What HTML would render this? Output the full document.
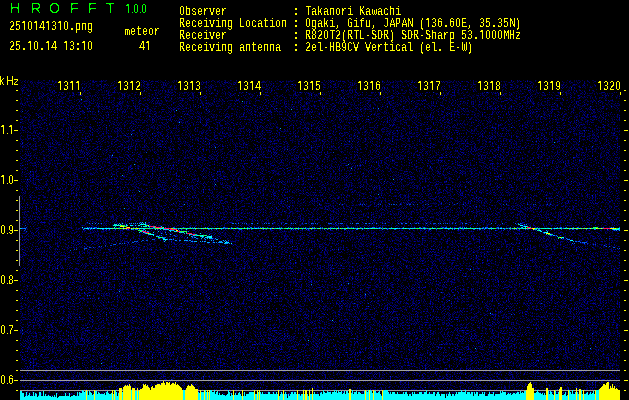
<!DOCTYPE html>
<html><head><meta charset="utf-8"><style>
html,body{margin:0;padding:0;background:#000;width:629px;height:400px;overflow:hidden;position:relative}
.t{position:absolute;white-space:pre;font-family:"Liberation Mono",monospace;font-size:13px;line-height:13px;color:#ff0;transform-origin:0 0;transform:scaleX(0.7692);filter:url(#cr)}
.t i{font-style:normal;font-family:"Liberation Sans",sans-serif;display:inline-block;width:7.8px;height:13px;text-align:center;line-height:13px;vertical-align:top;position:relative;top:-1px}
.t i.c{transform:scaleY(1.14);transform-origin:0 1px;clip-path:inset(-5px -5px 3.5px -5px)}
.t b{font-weight:normal;color:transparent}
.s{position:absolute;white-space:pre;font-family:"Liberation Sans",sans-serif;font-size:13px;line-height:13px;color:#ff0;transform-origin:0 0;filter:url(#cr)}
.g{position:absolute;white-space:pre;font-family:"Liberation Sans",sans-serif;font-size:14px;line-height:14px;color:#0f0;filter:url(#cr)}
svg{position:absolute;left:0;top:0}
</style></head><body>

<svg width="629" height="400" viewBox="0 0 629 400" shape-rendering="crispEdges">
<defs><filter id="nz" x="20" y="80" width="600" height="320" filterUnits="userSpaceOnUse" color-interpolation-filters="sRGB">
<feTurbulence type="fractalNoise" baseFrequency="1.37" numOctaves="1" seed="3"/>
<feColorMatrix type="matrix" values="0 0 0 0 0  0 0 1 0 0  0 0 1 0 0  0 0 0 0 1"/>
<feComponentTransfer><feFuncR type="linear" slope="0" intercept="0"/><feFuncG type="table" tableValues="0 0.0 0.0 0.0 0.0 0.0 0.0 0.0 0.0 0.0 0.0 0.0 0.0 0.0 0.0 0.0 0.0 0.0 0.0 0.0 0.0 0.0 0.0 0.0 0.0 0.0 0.0 0.0 0.0 0.0 0.0 0.0 0.0 0.0 0.0 0.0 0.0 0.0 0.063 0.125 0.188 0.25 0.272 0.294 0.317 0.339 0.361 0.383 0.406 0.428 0.45"/><feFuncB type="table" tableValues="0 0.0 0.0 0.0 0.0 0.0 0.0 0.0 0.0 0.0 0.0 0.0 0.0 0.0 0.0 0.0 0.0 0.0 0.0 0.0 0.0 0.0 0.0 0.0 0.0 0.0 0.0 0.0 0.256 0.319 0.376 0.429 0.482 0.538 0.594 0.65 0.7 0.75 0.8 0.85 0.864 0.877 0.891 0.905 0.918 0.932 0.945 0.959 0.973 0.986 1"/><feFuncA type="linear" slope="0" intercept="1"/></feComponentTransfer>
</filter><filter id="cr" color-interpolation-filters="sRGB"><feComponentTransfer><feFuncA type="discrete" tableValues="0 1"/></feComponentTransfer></filter></defs>
<rect x="20" y="80" width="600" height="320" fill="#000" filter="url(#nz)"/>
<linearGradient id="dk" x1="0" y1="0" x2="0" y2="1"><stop offset="0" stop-color="#000" stop-opacity="0.1"/><stop offset="0.7" stop-color="#000" stop-opacity="0"/></linearGradient>
<rect x="20" y="80" width="600" height="320" fill="url(#dk)"/>
<rect x="87" y="227" width="1" height="1" fill="#0060ff"/>
<rect x="88" y="229" width="1" height="1" fill="#0050ff"/>
<rect x="89" y="227" width="1" height="1" fill="#0060ff"/>
<rect x="90" y="229" width="1" height="1" fill="#0050ff"/>
<rect x="91" y="227" width="1" height="1" fill="#0050ff"/>
<rect x="94" y="227" width="1" height="1" fill="#0040e0"/>
<rect x="95" y="227" width="1" height="1" fill="#0050ff"/>
<rect x="96" y="227" width="1" height="1" fill="#0050ff"/>
<rect x="102" y="229" width="1" height="1" fill="#0060ff"/>
<rect x="103" y="229" width="1" height="1" fill="#0050ff"/>
<rect x="106" y="229" width="1" height="1" fill="#0060ff"/>
<rect x="109" y="229" width="1" height="1" fill="#0050ff"/>
<rect x="115" y="229" width="1" height="1" fill="#0050ff"/>
<rect x="119" y="227" width="1" height="1" fill="#0040e0"/>
<rect x="123" y="229" width="1" height="1" fill="#0060ff"/>
<rect x="126" y="229" width="1" height="1" fill="#0050ff"/>
<rect x="129" y="227" width="1" height="1" fill="#0040e0"/>
<rect x="133" y="227" width="1" height="1" fill="#0040e0"/>
<rect x="133" y="229" width="1" height="1" fill="#0060ff"/>
<rect x="136" y="227" width="1" height="1" fill="#0060ff"/>
<rect x="136" y="229" width="1" height="1" fill="#0060ff"/>
<rect x="137" y="229" width="1" height="1" fill="#0060ff"/>
<rect x="143" y="229" width="1" height="1" fill="#0060ff"/>
<rect x="149" y="227" width="1" height="1" fill="#0060ff"/>
<rect x="156" y="227" width="1" height="1" fill="#0040e0"/>
<rect x="165" y="227" width="1" height="1" fill="#0050ff"/>
<rect x="167" y="229" width="1" height="1" fill="#0040e0"/>
<rect x="173" y="227" width="1" height="1" fill="#0050ff"/>
<rect x="178" y="229" width="1" height="1" fill="#0050ff"/>
<rect x="181" y="229" width="1" height="1" fill="#0050ff"/>
<rect x="183" y="227" width="1" height="1" fill="#0060ff"/>
<rect x="190" y="227" width="1" height="1" fill="#0060ff"/>
<rect x="192" y="227" width="1" height="1" fill="#0040e0"/>
<rect x="194" y="227" width="1" height="1" fill="#0050ff"/>
<rect x="195" y="229" width="1" height="1" fill="#0050ff"/>
<rect x="205" y="227" width="1" height="1" fill="#0060ff"/>
<rect x="207" y="227" width="1" height="1" fill="#0040e0"/>
<rect x="208" y="229" width="1" height="1" fill="#0050ff"/>
<rect x="209" y="229" width="1" height="1" fill="#0040e0"/>
<rect x="211" y="229" width="1" height="1" fill="#0060ff"/>
<rect x="216" y="229" width="1" height="1" fill="#0050ff"/>
<rect x="221" y="229" width="1" height="1" fill="#0060ff"/>
<rect x="223" y="227" width="1" height="1" fill="#0040e0"/>
<rect x="224" y="227" width="1" height="1" fill="#0060ff"/>
<rect x="231" y="227" width="1" height="1" fill="#0060ff"/>
<rect x="237" y="227" width="1" height="1" fill="#0040e0"/>
<rect x="239" y="229" width="1" height="1" fill="#0040e0"/>
<rect x="240" y="229" width="1" height="1" fill="#0060ff"/>
<rect x="241" y="229" width="1" height="1" fill="#0050ff"/>
<rect x="244" y="227" width="1" height="1" fill="#0060ff"/>
<rect x="247" y="227" width="1" height="1" fill="#0050ff"/>
<rect x="247" y="229" width="1" height="1" fill="#0050ff"/>
<rect x="250" y="227" width="1" height="1" fill="#0060ff"/>
<rect x="251" y="227" width="1" height="1" fill="#0060ff"/>
<rect x="251" y="229" width="1" height="1" fill="#0040e0"/>
<rect x="254" y="227" width="1" height="1" fill="#0040e0"/>
<rect x="258" y="227" width="1" height="1" fill="#0050ff"/>
<rect x="260" y="227" width="1" height="1" fill="#0050ff"/>
<rect x="262" y="227" width="1" height="1" fill="#0050ff"/>
<rect x="263" y="227" width="1" height="1" fill="#0040e0"/>
<rect x="263" y="229" width="1" height="1" fill="#0050ff"/>
<rect x="266" y="229" width="1" height="1" fill="#0040e0"/>
<rect x="267" y="227" width="1" height="1" fill="#0040e0"/>
<rect x="270" y="229" width="1" height="1" fill="#0040e0"/>
<rect x="279" y="227" width="1" height="1" fill="#0040e0"/>
<rect x="280" y="229" width="1" height="1" fill="#0050ff"/>
<rect x="281" y="227" width="1" height="1" fill="#0050ff"/>
<rect x="288" y="227" width="1" height="1" fill="#0060ff"/>
<rect x="290" y="227" width="1" height="1" fill="#0050ff"/>
<rect x="291" y="229" width="1" height="1" fill="#0050ff"/>
<rect x="293" y="229" width="1" height="1" fill="#0050ff"/>
<rect x="295" y="229" width="1" height="1" fill="#0040e0"/>
<rect x="298" y="227" width="1" height="1" fill="#0040e0"/>
<rect x="298" y="229" width="1" height="1" fill="#0050ff"/>
<rect x="302" y="229" width="1" height="1" fill="#0040e0"/>
<rect x="305" y="227" width="1" height="1" fill="#0040e0"/>
<rect x="306" y="229" width="1" height="1" fill="#0050ff"/>
<rect x="308" y="229" width="1" height="1" fill="#0040e0"/>
<rect x="311" y="229" width="1" height="1" fill="#0060ff"/>
<rect x="312" y="227" width="1" height="1" fill="#0050ff"/>
<rect x="314" y="227" width="1" height="1" fill="#0060ff"/>
<rect x="320" y="227" width="1" height="1" fill="#0050ff"/>
<rect x="322" y="227" width="1" height="1" fill="#0040e0"/>
<rect x="324" y="229" width="1" height="1" fill="#0050ff"/>
<rect x="327" y="229" width="1" height="1" fill="#0060ff"/>
<rect x="330" y="227" width="1" height="1" fill="#0040e0"/>
<rect x="330" y="229" width="1" height="1" fill="#0050ff"/>
<rect x="336" y="229" width="1" height="1" fill="#0060ff"/>
<rect x="338" y="227" width="1" height="1" fill="#0060ff"/>
<rect x="344" y="229" width="1" height="1" fill="#0050ff"/>
<rect x="345" y="229" width="1" height="1" fill="#0060ff"/>
<rect x="347" y="227" width="1" height="1" fill="#0040e0"/>
<rect x="348" y="227" width="1" height="1" fill="#0050ff"/>
<rect x="351" y="227" width="1" height="1" fill="#0040e0"/>
<rect x="353" y="227" width="1" height="1" fill="#0040e0"/>
<rect x="356" y="229" width="1" height="1" fill="#0060ff"/>
<rect x="357" y="229" width="1" height="1" fill="#0060ff"/>
<rect x="360" y="227" width="1" height="1" fill="#0040e0"/>
<rect x="362" y="229" width="1" height="1" fill="#0060ff"/>
<rect x="364" y="227" width="1" height="1" fill="#0040e0"/>
<rect x="372" y="227" width="1" height="1" fill="#0060ff"/>
<rect x="373" y="227" width="1" height="1" fill="#0050ff"/>
<rect x="374" y="227" width="1" height="1" fill="#0050ff"/>
<rect x="379" y="227" width="1" height="1" fill="#0050ff"/>
<rect x="380" y="227" width="1" height="1" fill="#0040e0"/>
<rect x="382" y="227" width="1" height="1" fill="#0040e0"/>
<rect x="382" y="229" width="1" height="1" fill="#0060ff"/>
<rect x="387" y="229" width="1" height="1" fill="#0050ff"/>
<rect x="391" y="227" width="1" height="1" fill="#0050ff"/>
<rect x="394" y="229" width="1" height="1" fill="#0040e0"/>
<rect x="395" y="229" width="1" height="1" fill="#0050ff"/>
<rect x="403" y="227" width="1" height="1" fill="#0060ff"/>
<rect x="409" y="229" width="1" height="1" fill="#0060ff"/>
<rect x="414" y="227" width="1" height="1" fill="#0040e0"/>
<rect x="419" y="227" width="1" height="1" fill="#0060ff"/>
<rect x="420" y="227" width="1" height="1" fill="#0050ff"/>
<rect x="423" y="227" width="1" height="1" fill="#0040e0"/>
<rect x="424" y="227" width="1" height="1" fill="#0060ff"/>
<rect x="424" y="229" width="1" height="1" fill="#0040e0"/>
<rect x="429" y="229" width="1" height="1" fill="#0050ff"/>
<rect x="430" y="229" width="1" height="1" fill="#0060ff"/>
<rect x="432" y="227" width="1" height="1" fill="#0060ff"/>
<rect x="436" y="229" width="1" height="1" fill="#0050ff"/>
<rect x="442" y="227" width="1" height="1" fill="#0040e0"/>
<rect x="443" y="227" width="1" height="1" fill="#0050ff"/>
<rect x="445" y="227" width="1" height="1" fill="#0040e0"/>
<rect x="446" y="227" width="1" height="1" fill="#0060ff"/>
<rect x="448" y="229" width="1" height="1" fill="#0060ff"/>
<rect x="450" y="227" width="1" height="1" fill="#0050ff"/>
<rect x="452" y="229" width="1" height="1" fill="#0060ff"/>
<rect x="454" y="229" width="1" height="1" fill="#0050ff"/>
<rect x="458" y="229" width="1" height="1" fill="#0050ff"/>
<rect x="459" y="227" width="1" height="1" fill="#0050ff"/>
<rect x="460" y="227" width="1" height="1" fill="#0060ff"/>
<rect x="462" y="227" width="1" height="1" fill="#0050ff"/>
<rect x="463" y="229" width="1" height="1" fill="#0040e0"/>
<rect x="464" y="227" width="1" height="1" fill="#0060ff"/>
<rect x="466" y="227" width="1" height="1" fill="#0050ff"/>
<rect x="470" y="227" width="1" height="1" fill="#0050ff"/>
<rect x="473" y="229" width="1" height="1" fill="#0050ff"/>
<rect x="474" y="229" width="1" height="1" fill="#0050ff"/>
<rect x="479" y="229" width="1" height="1" fill="#0050ff"/>
<rect x="480" y="229" width="1" height="1" fill="#0040e0"/>
<rect x="483" y="227" width="1" height="1" fill="#0060ff"/>
<rect x="484" y="229" width="1" height="1" fill="#0050ff"/>
<rect x="485" y="227" width="1" height="1" fill="#0060ff"/>
<rect x="486" y="227" width="1" height="1" fill="#0050ff"/>
<rect x="487" y="227" width="1" height="1" fill="#0050ff"/>
<rect x="491" y="227" width="1" height="1" fill="#0050ff"/>
<rect x="491" y="229" width="1" height="1" fill="#0060ff"/>
<rect x="497" y="227" width="1" height="1" fill="#0060ff"/>
<rect x="498" y="227" width="1" height="1" fill="#0050ff"/>
<rect x="501" y="227" width="1" height="1" fill="#0040e0"/>
<rect x="504" y="229" width="1" height="1" fill="#0050ff"/>
<rect x="510" y="227" width="1" height="1" fill="#0060ff"/>
<rect x="510" y="229" width="1" height="1" fill="#0050ff"/>
<rect x="514" y="227" width="1" height="1" fill="#0060ff"/>
<rect x="514" y="229" width="1" height="1" fill="#0050ff"/>
<rect x="516" y="229" width="1" height="1" fill="#0050ff"/>
<rect x="517" y="227" width="1" height="1" fill="#0050ff"/>
<rect x="519" y="229" width="1" height="1" fill="#0050ff"/>
<rect x="525" y="229" width="1" height="1" fill="#0050ff"/>
<rect x="527" y="227" width="1" height="1" fill="#0060ff"/>
<rect x="527" y="229" width="1" height="1" fill="#0040e0"/>
<rect x="529" y="227" width="1" height="1" fill="#0040e0"/>
<rect x="534" y="229" width="1" height="1" fill="#0040e0"/>
<rect x="537" y="227" width="1" height="1" fill="#0040e0"/>
<rect x="551" y="229" width="1" height="1" fill="#0060ff"/>
<rect x="557" y="227" width="1" height="1" fill="#0060ff"/>
<rect x="560" y="227" width="1" height="1" fill="#0050ff"/>
<rect x="561" y="227" width="1" height="1" fill="#0050ff"/>
<rect x="561" y="229" width="1" height="1" fill="#0040e0"/>
<rect x="566" y="227" width="1" height="1" fill="#0060ff"/>
<rect x="569" y="229" width="1" height="1" fill="#0050ff"/>
<rect x="572" y="229" width="1" height="1" fill="#0060ff"/>
<rect x="573" y="227" width="1" height="1" fill="#0060ff"/>
<rect x="573" y="229" width="1" height="1" fill="#0040e0"/>
<rect x="576" y="229" width="1" height="1" fill="#0060ff"/>
<rect x="577" y="227" width="1" height="1" fill="#0050ff"/>
<rect x="577" y="229" width="1" height="1" fill="#0040e0"/>
<rect x="578" y="227" width="1" height="1" fill="#0040e0"/>
<rect x="586" y="229" width="1" height="1" fill="#0050ff"/>
<rect x="593" y="227" width="1" height="1" fill="#0040e0"/>
<rect x="595" y="227" width="1" height="1" fill="#0050ff"/>
<rect x="595" y="229" width="1" height="1" fill="#0050ff"/>
<rect x="603" y="227" width="1" height="1" fill="#0040e0"/>
<rect x="607" y="229" width="1" height="1" fill="#0060ff"/>
<rect x="611" y="227" width="1" height="1" fill="#0060ff"/>
<rect x="619" y="227" width="1" height="1" fill="#0060ff"/>
<rect x="594" y="229" width="1" height="1" fill="#0090ff"/>
<rect x="596" y="228" width="1" height="1" fill="#00c0ff"/>
<rect x="613" y="227" width="1" height="1" fill="#0090ff"/>
<rect x="614" y="230" width="1" height="1" fill="#0050ff"/>
<rect x="616" y="230" width="1" height="1" fill="#0090ff"/>
<rect x="619" y="230" width="1" height="1" fill="#00c0ff"/>
<rect x="114" y="227" width="1" height="1" fill="#00e0ff"/>
<rect x="119" y="223" width="1" height="1" fill="#0090ff"/>
<rect x="121" y="226" width="1" height="1" fill="#0090ff"/>
<rect x="122" y="223" width="1" height="1" fill="#00e0ff"/>
<rect x="120" y="228" width="1" height="1" fill="#00e0ff"/>
<rect x="126" y="224" width="1" height="1" fill="#00c0ff"/>
<rect x="128" y="229" width="1" height="1" fill="#0050ff"/>
<rect x="140" y="222" width="1" height="1" fill="#0090ff"/>
<rect x="141" y="223" width="1" height="1" fill="#0050ff"/>
<rect x="142" y="222" width="1" height="1" fill="#00e0ff"/>
<rect x="143" y="223" width="1" height="1" fill="#00e0ff"/>
<rect x="145" y="222" width="1" height="1" fill="#00e0ff"/>
<rect x="145" y="224" width="1" height="1" fill="#0050ff"/>
<rect x="155" y="229" width="1" height="1" fill="#00e0ff"/>
<rect x="157" y="229" width="1" height="1" fill="#0050ff"/>
<rect x="160" y="229" width="1" height="1" fill="#00c0ff"/>
<rect x="161" y="226" width="1" height="1" fill="#00e0ff"/>
<rect x="162" y="228" width="1" height="1" fill="#0050ff"/>
<rect x="170" y="231" width="1" height="1" fill="#00c0ff"/>
<rect x="179" y="230" width="1" height="1" fill="#0050ff"/>
<rect x="186" y="229" width="1" height="1" fill="#00e0ff"/>
<rect x="188" y="231" width="1" height="1" fill="#0050ff"/>
<rect x="189" y="235" width="1" height="1" fill="#0090ff"/>
<rect x="192" y="236" width="1" height="1" fill="#0050ff"/>
<rect x="193" y="235" width="1" height="1" fill="#00e0ff"/>
<rect x="194" y="235" width="1" height="1" fill="#0090ff"/>
<rect x="196" y="234" width="1" height="1" fill="#0090ff"/>
<rect x="200" y="233" width="1" height="1" fill="#00e0ff"/>
<rect x="201" y="236" width="1" height="1" fill="#00c0ff"/>
<rect x="202" y="237" width="1" height="1" fill="#00e0ff"/>
<rect x="209" y="234" width="1" height="1" fill="#0050ff"/>
<rect x="210" y="237" width="1" height="1" fill="#0050ff"/>
<rect x="209" y="238" width="1" height="1" fill="#00c0ff"/>
<rect x="210" y="236" width="1" height="1" fill="#00e0ff"/>
<rect x="211" y="235" width="1" height="1" fill="#0050ff"/>
<rect x="225" y="240" width="1" height="1" fill="#0090ff"/>
<rect x="228" y="240" width="1" height="1" fill="#0050ff"/>
<rect x="139" y="232" width="1" height="1" fill="#00e0ff"/>
<rect x="140" y="231" width="1" height="1" fill="#00e0ff"/>
<rect x="142" y="230" width="1" height="1" fill="#00e0ff"/>
<rect x="143" y="230" width="1" height="1" fill="#0050ff"/>
<rect x="145" y="233" width="1" height="1" fill="#0090ff"/>
<rect x="145" y="230" width="1" height="1" fill="#00c0ff"/>
<rect x="147" y="231" width="1" height="1" fill="#0090ff"/>
<rect x="148" y="231" width="1" height="1" fill="#0050ff"/>
<rect x="148" y="234" width="1" height="1" fill="#0090ff"/>
<rect x="149" y="234" width="1" height="1" fill="#00c0ff"/>
<rect x="153" y="232" width="1" height="1" fill="#00e0ff"/>
<rect x="159" y="235" width="1" height="1" fill="#0050ff"/>
<rect x="161" y="235" width="1" height="1" fill="#0050ff"/>
<rect x="162" y="238" width="1" height="1" fill="#0090ff"/>
<rect x="163" y="237" width="1" height="1" fill="#0050ff"/>
<rect x="164" y="241" width="1" height="1" fill="#00e0ff"/>
<rect x="165" y="240" width="1" height="1" fill="#00c0ff"/>
<rect x="520" y="223" width="1" height="1" fill="#0050ff"/>
<rect x="521" y="227" width="1" height="1" fill="#00c0ff"/>
<rect x="522" y="227" width="1" height="1" fill="#00e0ff"/>
<rect x="524" y="224" width="1" height="1" fill="#0090ff"/>
<rect x="525" y="227" width="1" height="1" fill="#00e0ff"/>
<rect x="526" y="224" width="1" height="1" fill="#0090ff"/>
<rect x="528" y="228" width="1" height="1" fill="#0050ff"/>
<rect x="538" y="229" width="1" height="1" fill="#0090ff"/>
<rect x="539" y="229" width="1" height="1" fill="#0050ff"/>
<rect x="544" y="233" width="1" height="1" fill="#0050ff"/>
<rect x="546" y="230" width="1" height="1" fill="#0090ff"/>
<rect x="547" y="231" width="1" height="1" fill="#00c0ff"/>
<rect x="546" y="234" width="1" height="1" fill="#0090ff"/>
<rect x="547" y="232" width="1" height="1" fill="#0090ff"/>
<rect x="550" y="235" width="1" height="1" fill="#0050ff"/>
<rect x="551" y="235" width="1" height="1" fill="#0050ff"/>
<rect x="558" y="238" width="1" height="1" fill="#00c0ff"/>
<rect x="561" y="238" width="1" height="1" fill="#00e0ff"/>
<rect x="150" y="226" width="1" height="1" fill="#00a0ff"/>
<rect x="151" y="226" width="1" height="1" fill="#00c0ff"/>
<rect x="152" y="226" width="1" height="1" fill="#00c0ff"/>
<rect x="153" y="227" width="1" height="1" fill="#00c0ff"/>
<rect x="154" y="227" width="1" height="1" fill="#00c0ff"/>
<rect x="155" y="227" width="1" height="1" fill="#00e0ff"/>
<rect x="156" y="227" width="1" height="1" fill="#00e0ff"/>
<rect x="158" y="228" width="1" height="1" fill="#00c0ff"/>
<rect x="159" y="228" width="1" height="1" fill="#00ffc0"/>
<rect x="160" y="228" width="1" height="1" fill="#00ffc0"/>
<rect x="161" y="228" width="1" height="1" fill="#00e0ff"/>
<rect x="162" y="228" width="1" height="1" fill="#00ffc0"/>
<rect x="163" y="229" width="1" height="1" fill="#00c0ff"/>
<rect x="164" y="229" width="1" height="1" fill="#00e0ff"/>
<rect x="165" y="229" width="1" height="1" fill="#00c0ff"/>
<rect x="166" y="229" width="1" height="1" fill="#00c0ff"/>
<rect x="167" y="229" width="1" height="1" fill="#00e0ff"/>
<rect x="168" y="229" width="1" height="1" fill="#00e0ff"/>
<rect x="169" y="230" width="1" height="1" fill="#00e0ff"/>
<rect x="170" y="230" width="1" height="1" fill="#00e0ff"/>
<rect x="171" y="230" width="1" height="1" fill="#00a0ff"/>
<rect x="172" y="230" width="1" height="1" fill="#00a0ff"/>
<rect x="173" y="230" width="1" height="1" fill="#00ffc0"/>
<rect x="174" y="231" width="1" height="1" fill="#00e0ff"/>
<rect x="175" y="231" width="1" height="1" fill="#00c0ff"/>
<rect x="176" y="231" width="1" height="1" fill="#00ffc0"/>
<rect x="177" y="231" width="1" height="1" fill="#00c0ff"/>
<rect x="178" y="231" width="1" height="1" fill="#00e0ff"/>
<rect x="179" y="232" width="1" height="1" fill="#00ffc0"/>
<rect x="180" y="232" width="1" height="1" fill="#00a0ff"/>
<rect x="181" y="232" width="1" height="1" fill="#00ffc0"/>
<rect x="182" y="232" width="1" height="1" fill="#00a0ff"/>
<rect x="183" y="232" width="1" height="1" fill="#00e0ff"/>
<rect x="184" y="233" width="1" height="1" fill="#00c0ff"/>
<rect x="186" y="233" width="1" height="1" fill="#00c0ff"/>
<rect x="187" y="233" width="1" height="1" fill="#00e0ff"/>
<rect x="188" y="233" width="1" height="1" fill="#00ffc0"/>
<rect x="189" y="234" width="1" height="1" fill="#00ffc0"/>
<rect x="190" y="234" width="1" height="1" fill="#00c0ff"/>
<rect x="191" y="234" width="1" height="1" fill="#00c0ff"/>
<rect x="192" y="234" width="1" height="1" fill="#00ffc0"/>
<rect x="193" y="234" width="1" height="1" fill="#00a0ff"/>
<rect x="194" y="235" width="1" height="1" fill="#00ffc0"/>
<rect x="195" y="235" width="1" height="1" fill="#00a0ff"/>
<rect x="196" y="235" width="1" height="1" fill="#00e0ff"/>
<rect x="197" y="235" width="1" height="1" fill="#00a0ff"/>
<rect x="199" y="235" width="1" height="1" fill="#00a0ff"/>
<rect x="200" y="236" width="1" height="1" fill="#00c0ff"/>
<rect x="201" y="236" width="1" height="1" fill="#00ffc0"/>
<rect x="202" y="236" width="1" height="1" fill="#00e0ff"/>
<rect x="203" y="236" width="1" height="1" fill="#00e0ff"/>
<rect x="205" y="237" width="1" height="1" fill="#00e0ff"/>
<rect x="206" y="237" width="1" height="1" fill="#00c0ff"/>
<rect x="207" y="237" width="1" height="1" fill="#00e0ff"/>
<rect x="208" y="237" width="1" height="1" fill="#00a0ff"/>
<rect x="209" y="237" width="1" height="1" fill="#00e0ff"/>
<rect x="210" y="238" width="1" height="1" fill="#00a0ff"/>
<rect x="211" y="238" width="1" height="1" fill="#00a0ff"/>
<rect x="212" y="238" width="1" height="1" fill="#00e0ff"/>
<rect x="114" y="224" width="1" height="1" fill="#00ffc0"/>
<rect x="115" y="224" width="1" height="1" fill="#00c0ff"/>
<rect x="116" y="224" width="1" height="1" fill="#00e0ff"/>
<rect x="118" y="224" width="1" height="1" fill="#00c0ff"/>
<rect x="120" y="224" width="1" height="1" fill="#00e0ff"/>
<rect x="123" y="225" width="1" height="1" fill="#00c0ff"/>
<rect x="126" y="225" width="1" height="1" fill="#00e0ff"/>
<rect x="127" y="225" width="1" height="1" fill="#00c0ff"/>
<rect x="130" y="225" width="1" height="1" fill="#00e0ff"/>
<rect x="131" y="225" width="1" height="1" fill="#00ffc0"/>
<rect x="132" y="225" width="1" height="1" fill="#00e0ff"/>
<rect x="135" y="225" width="1" height="1" fill="#00e0ff"/>
<rect x="138" y="225" width="1" height="1" fill="#00ffc0"/>
<rect x="139" y="225" width="1" height="1" fill="#00e0ff"/>
<rect x="141" y="226" width="1" height="1" fill="#00ffc0"/>
<rect x="143" y="226" width="1" height="1" fill="#00e0ff"/>
<rect x="144" y="226" width="1" height="1" fill="#00ffc0"/>
<rect x="145" y="226" width="1" height="1" fill="#00ffc0"/>
<rect x="146" y="226" width="1" height="1" fill="#00e0ff"/>
<rect x="148" y="226" width="1" height="1" fill="#00e0ff"/>
<rect x="149" y="226" width="1" height="1" fill="#00c0ff"/>
<rect x="150" y="226" width="1" height="1" fill="#00c0ff"/>
<rect x="138" y="230" width="1" height="1" fill="#00e0ff"/>
<rect x="139" y="230" width="1" height="1" fill="#00ffc0"/>
<rect x="140" y="231" width="1" height="1" fill="#00ffc0"/>
<rect x="141" y="231" width="1" height="1" fill="#00ffc0"/>
<rect x="142" y="231" width="1" height="1" fill="#00a0ff"/>
<rect x="143" y="232" width="1" height="1" fill="#00ffc0"/>
<rect x="144" y="232" width="1" height="1" fill="#00c0ff"/>
<rect x="145" y="232" width="1" height="1" fill="#00ffc0"/>
<rect x="146" y="233" width="1" height="1" fill="#00e0ff"/>
<rect x="147" y="233" width="1" height="1" fill="#00e0ff"/>
<rect x="148" y="233" width="1" height="1" fill="#00a0ff"/>
<rect x="149" y="234" width="1" height="1" fill="#00c0ff"/>
<rect x="150" y="234" width="1" height="1" fill="#00a0ff"/>
<rect x="151" y="234" width="1" height="1" fill="#00c0ff"/>
<rect x="152" y="234" width="1" height="1" fill="#00ffc0"/>
<rect x="153" y="235" width="1" height="1" fill="#00e0ff"/>
<rect x="156" y="236" width="1" height="1" fill="#00ffc0"/>
<rect x="157" y="236" width="1" height="1" fill="#00a0ff"/>
<rect x="158" y="236" width="1" height="1" fill="#00c0ff"/>
<rect x="159" y="237" width="1" height="1" fill="#00ffc0"/>
<rect x="160" y="237" width="1" height="1" fill="#00a0ff"/>
<rect x="161" y="237" width="1" height="1" fill="#00c0ff"/>
<rect x="162" y="238" width="1" height="1" fill="#00a0ff"/>
<rect x="163" y="238" width="1" height="1" fill="#00e0ff"/>
<rect x="164" y="238" width="1" height="1" fill="#00a0ff"/>
<rect x="165" y="239" width="1" height="1" fill="#00a0ff"/>
<rect x="166" y="239" width="1" height="1" fill="#00ffc0"/>
<rect x="166" y="239" width="1" height="1" fill="#0070ff"/>
<rect x="167" y="239" width="1" height="1" fill="#0090ff"/>
<rect x="169" y="239" width="1" height="1" fill="#0070ff"/>
<rect x="170" y="239" width="1" height="1" fill="#0070ff"/>
<rect x="171" y="239" width="1" height="1" fill="#00b0ff"/>
<rect x="173" y="239" width="1" height="1" fill="#0090ff"/>
<rect x="175" y="240" width="1" height="1" fill="#0090ff"/>
<rect x="176" y="240" width="1" height="1" fill="#0070ff"/>
<rect x="179" y="240" width="1" height="1" fill="#0070ff"/>
<rect x="180" y="240" width="1" height="1" fill="#0070ff"/>
<rect x="184" y="240" width="1" height="1" fill="#00b0ff"/>
<rect x="185" y="240" width="1" height="1" fill="#0070ff"/>
<rect x="186" y="240" width="1" height="1" fill="#00b0ff"/>
<rect x="187" y="240" width="1" height="1" fill="#0090ff"/>
<rect x="189" y="240" width="1" height="1" fill="#0090ff"/>
<rect x="190" y="240" width="1" height="1" fill="#0070ff"/>
<rect x="191" y="241" width="1" height="1" fill="#0090ff"/>
<rect x="192" y="241" width="1" height="1" fill="#0090ff"/>
<rect x="194" y="241" width="1" height="1" fill="#00b0ff"/>
<rect x="195" y="241" width="1" height="1" fill="#00b0ff"/>
<rect x="196" y="241" width="1" height="1" fill="#00b0ff"/>
<rect x="200" y="241" width="1" height="1" fill="#00b0ff"/>
<rect x="202" y="241" width="1" height="1" fill="#00b0ff"/>
<rect x="204" y="241" width="1" height="1" fill="#00b0ff"/>
<rect x="205" y="241" width="1" height="1" fill="#0090ff"/>
<rect x="207" y="242" width="1" height="1" fill="#00b0ff"/>
<rect x="208" y="242" width="1" height="1" fill="#00b0ff"/>
<rect x="209" y="242" width="1" height="1" fill="#0090ff"/>
<rect x="213" y="242" width="1" height="1" fill="#0090ff"/>
<rect x="214" y="242" width="1" height="1" fill="#0090ff"/>
<rect x="216" y="242" width="1" height="1" fill="#0070ff"/>
<rect x="218" y="242" width="1" height="1" fill="#0070ff"/>
<rect x="219" y="242" width="1" height="1" fill="#0090ff"/>
<rect x="220" y="242" width="1" height="1" fill="#00b0ff"/>
<rect x="221" y="242" width="1" height="1" fill="#0090ff"/>
<rect x="222" y="242" width="1" height="1" fill="#00b0ff"/>
<rect x="224" y="243" width="1" height="1" fill="#00b0ff"/>
<rect x="225" y="243" width="1" height="1" fill="#00b0ff"/>
<rect x="226" y="243" width="1" height="1" fill="#0090ff"/>
<rect x="227" y="243" width="1" height="1" fill="#0090ff"/>
<rect x="229" y="243" width="1" height="1" fill="#0090ff"/>
<rect x="231" y="243" width="1" height="1" fill="#00b0ff"/>
<rect x="212" y="238" width="1" height="1" fill="#0090ff"/>
<rect x="215" y="238" width="1" height="1" fill="#0090ff"/>
<rect x="216" y="239" width="1" height="1" fill="#00b0ff"/>
<rect x="217" y="239" width="1" height="1" fill="#00b0ff"/>
<rect x="223" y="240" width="1" height="1" fill="#00b0ff"/>
<rect x="575" y="241" width="1" height="1" fill="#0060f0"/>
<rect x="576" y="241" width="1" height="1" fill="#0040d0"/>
<rect x="579" y="241" width="1" height="1" fill="#0060f0"/>
<rect x="583" y="242" width="1" height="1" fill="#0050e0"/>
<rect x="584" y="242" width="1" height="1" fill="#0060f0"/>
<rect x="585" y="242" width="1" height="1" fill="#0050e0"/>
<rect x="586" y="242" width="1" height="1" fill="#0050e0"/>
<rect x="587" y="243" width="1" height="1" fill="#0040d0"/>
<rect x="593" y="244" width="1" height="1" fill="#0040d0"/>
<rect x="595" y="244" width="1" height="1" fill="#0040d0"/>
<rect x="604" y="245" width="1" height="1" fill="#0060f0"/>
<rect x="606" y="246" width="1" height="1" fill="#0060f0"/>
<rect x="609" y="246" width="1" height="1" fill="#0060f0"/>
<rect x="613" y="247" width="1" height="1" fill="#0050e0"/>
<rect x="614" y="247" width="1" height="1" fill="#0060f0"/>
<rect x="617" y="248" width="1" height="1" fill="#0040d0"/>
<rect x="619" y="248" width="1" height="1" fill="#0060f0"/>
<rect x="518" y="224" width="1" height="1" fill="#0090ff"/>
<rect x="519" y="224" width="1" height="1" fill="#0090ff"/>
<rect x="520" y="225" width="1" height="1" fill="#0070ff"/>
<rect x="522" y="225" width="1" height="1" fill="#0070ff"/>
<rect x="523" y="226" width="1" height="1" fill="#0070ff"/>
<rect x="525" y="226" width="1" height="1" fill="#00b0ff"/>
<rect x="526" y="226" width="1" height="1" fill="#0090ff"/>
<rect x="527" y="227" width="1" height="1" fill="#00b0ff"/>
<rect x="531" y="228" width="1" height="1" fill="#0070ff"/>
<rect x="532" y="228" width="1" height="1" fill="#00b0ff"/>
<rect x="534" y="229" width="1" height="1" fill="#0090ff"/>
<rect x="535" y="229" width="1" height="1" fill="#0090ff"/>
<rect x="536" y="229" width="1" height="1" fill="#00b0ff"/>
<rect x="537" y="230" width="1" height="1" fill="#00b0ff"/>
<rect x="539" y="230" width="1" height="1" fill="#0090ff"/>
<rect x="540" y="231" width="1" height="1" fill="#00b0ff"/>
<rect x="541" y="231" width="1" height="1" fill="#0070ff"/>
<rect x="543" y="232" width="1" height="1" fill="#0070ff"/>
<rect x="544" y="232" width="1" height="1" fill="#0070ff"/>
<rect x="547" y="233" width="1" height="1" fill="#0070ff"/>
<rect x="549" y="233" width="1" height="1" fill="#0090ff"/>
<rect x="550" y="234" width="1" height="1" fill="#0070ff"/>
<rect x="552" y="234" width="1" height="1" fill="#0090ff"/>
<rect x="553" y="235" width="1" height="1" fill="#00b0ff"/>
<rect x="554" y="235" width="1" height="1" fill="#0090ff"/>
<rect x="556" y="235" width="1" height="1" fill="#0070ff"/>
<rect x="557" y="236" width="1" height="1" fill="#0090ff"/>
<rect x="560" y="237" width="1" height="1" fill="#00b0ff"/>
<rect x="561" y="237" width="1" height="1" fill="#0070ff"/>
<rect x="562" y="237" width="1" height="1" fill="#0090ff"/>
<rect x="563" y="238" width="1" height="1" fill="#0070ff"/>
<rect x="566" y="238" width="1" height="1" fill="#0070ff"/>
<rect x="567" y="239" width="1" height="1" fill="#0070ff"/>
<rect x="568" y="239" width="1" height="1" fill="#0070ff"/>
<rect x="569" y="239" width="1" height="1" fill="#0090ff"/>
<rect x="570" y="240" width="1" height="1" fill="#0090ff"/>
<rect x="571" y="240" width="1" height="1" fill="#00b0ff"/>
<rect x="573" y="241" width="1" height="1" fill="#0090ff"/>
<rect x="115" y="226" width="1" height="1" fill="#0090ff"/>
<rect x="123" y="227" width="1" height="1" fill="#00b0ff"/>
<rect x="126" y="227" width="1" height="1" fill="#0070ff"/>
<rect x="128" y="227" width="1" height="1" fill="#00b0ff"/>
<rect x="130" y="228" width="1" height="1" fill="#0070ff"/>
<rect x="131" y="229" width="1" height="1" fill="#00b0ff"/>
<rect x="132" y="229" width="1" height="1" fill="#0070ff"/>
<rect x="133" y="228" width="1" height="1" fill="#0090ff"/>
<rect x="135" y="229" width="1" height="1" fill="#0070ff"/>
<rect x="138" y="230" width="1" height="1" fill="#0090ff"/>
<rect x="139" y="229" width="1" height="1" fill="#0070ff"/>
<rect x="142" y="230" width="1" height="1" fill="#00b0ff"/>
<rect x="143" y="229" width="1" height="1" fill="#0070ff"/>
<rect x="144" y="229" width="1" height="1" fill="#00b0ff"/>
<rect x="153" y="232" width="1" height="1" fill="#00b0ff"/>
<rect x="158" y="231" width="1" height="1" fill="#00b0ff"/>
<rect x="161" y="233" width="1" height="1" fill="#0090ff"/>
<rect x="165" y="232" width="1" height="1" fill="#0070ff"/>
<rect x="166" y="234" width="1" height="1" fill="#0070ff"/>
<rect x="170" y="234" width="1" height="1" fill="#00b0ff"/>
<rect x="174" y="235" width="1" height="1" fill="#0070ff"/>
<rect x="187" y="237" width="1" height="1" fill="#0090ff"/>
<rect x="191" y="236" width="1" height="1" fill="#00b0ff"/>
<rect x="192" y="237" width="1" height="1" fill="#0070ff"/>
<rect x="194" y="237" width="1" height="1" fill="#0090ff"/>
<rect x="195" y="237" width="1" height="1" fill="#0090ff"/>
<rect x="196" y="238" width="1" height="1" fill="#0070ff"/>
<rect x="197" y="238" width="1" height="1" fill="#0070ff"/>
<rect x="201" y="238" width="1" height="1" fill="#00b0ff"/>
<rect x="204" y="238" width="1" height="1" fill="#0090ff"/>
<rect x="205" y="239" width="1" height="1" fill="#0090ff"/>
<rect x="207" y="238" width="1" height="1" fill="#00b0ff"/>
<rect x="211" y="240" width="1" height="1" fill="#0090ff"/>
<rect x="213" y="240" width="1" height="1" fill="#0090ff"/>
<rect x="219" y="241" width="1" height="1" fill="#0090ff"/>
<rect x="220" y="241" width="1" height="1" fill="#0070ff"/>
<rect x="221" y="241" width="1" height="1" fill="#00b0ff"/>
<rect x="224" y="241" width="1" height="1" fill="#0070ff"/>
<rect x="226" y="241" width="1" height="1" fill="#00b0ff"/>
<rect x="227" y="242" width="1" height="1" fill="#0070ff"/>
<rect x="232" y="223" width="1" height="1" fill="#0070ff"/>
<rect x="233" y="223" width="1" height="1" fill="#0070ff"/>
<rect x="235" y="223" width="1" height="1" fill="#0060ff"/>
<rect x="238" y="223" width="1" height="1" fill="#0070ff"/>
<rect x="242" y="223" width="1" height="1" fill="#0040d0"/>
<rect x="244" y="223" width="1" height="1" fill="#0040d0"/>
<rect x="246" y="223" width="1" height="1" fill="#0060ff"/>
<rect x="251" y="223" width="1" height="1" fill="#0060ff"/>
<rect x="252" y="223" width="1" height="1" fill="#0070ff"/>
<rect x="257" y="223" width="1" height="1" fill="#0070ff"/>
<rect x="264" y="223" width="1" height="1" fill="#0070ff"/>
<rect x="266" y="223" width="1" height="1" fill="#0050f0"/>
<rect x="268" y="223" width="1" height="1" fill="#0050f0"/>
<rect x="269" y="223" width="1" height="1" fill="#0040d0"/>
<rect x="272" y="223" width="1" height="1" fill="#0060ff"/>
<rect x="281" y="223" width="1" height="1" fill="#0040d0"/>
<rect x="285" y="223" width="1" height="1" fill="#0060ff"/>
<rect x="286" y="223" width="1" height="1" fill="#0050f0"/>
<rect x="291" y="223" width="1" height="1" fill="#0060ff"/>
<rect x="293" y="223" width="1" height="1" fill="#0040d0"/>
<rect x="295" y="223" width="1" height="1" fill="#0070ff"/>
<rect x="302" y="223" width="1" height="1" fill="#0040d0"/>
<rect x="305" y="223" width="1" height="1" fill="#0040d0"/>
<rect x="306" y="223" width="1" height="1" fill="#0050f0"/>
<rect x="311" y="223" width="1" height="1" fill="#0070ff"/>
<rect x="312" y="223" width="1" height="1" fill="#0040d0"/>
<rect x="313" y="223" width="1" height="1" fill="#0040d0"/>
<rect x="315" y="223" width="1" height="1" fill="#0060ff"/>
<rect x="317" y="223" width="1" height="1" fill="#0040d0"/>
<rect x="328" y="223" width="1" height="1" fill="#0050f0"/>
<rect x="329" y="223" width="1" height="1" fill="#0040d0"/>
<rect x="330" y="223" width="1" height="1" fill="#0060ff"/>
<rect x="331" y="223" width="1" height="1" fill="#0050f0"/>
<rect x="335" y="223" width="1" height="1" fill="#0040d0"/>
<rect x="338" y="223" width="1" height="1" fill="#0040d0"/>
<rect x="340" y="223" width="1" height="1" fill="#0050f0"/>
<rect x="341" y="223" width="1" height="1" fill="#0050f0"/>
<rect x="342" y="223" width="1" height="1" fill="#0050f0"/>
<rect x="350" y="223" width="1" height="1" fill="#0040d0"/>
<rect x="352" y="223" width="1" height="1" fill="#0070ff"/>
<rect x="356" y="223" width="1" height="1" fill="#0070ff"/>
<rect x="357" y="223" width="1" height="1" fill="#0050f0"/>
<rect x="358" y="223" width="1" height="1" fill="#0070ff"/>
<rect x="365" y="223" width="1" height="1" fill="#0070ff"/>
<rect x="366" y="223" width="1" height="1" fill="#0070ff"/>
<rect x="369" y="223" width="1" height="1" fill="#0070ff"/>
<rect x="372" y="223" width="1" height="1" fill="#0060ff"/>
<rect x="376" y="223" width="1" height="1" fill="#0070ff"/>
<rect x="382" y="223" width="1" height="1" fill="#0040d0"/>
<rect x="385" y="223" width="1" height="1" fill="#0070ff"/>
<rect x="398" y="223" width="1" height="1" fill="#0060ff"/>
<rect x="401" y="223" width="1" height="1" fill="#0070ff"/>
<rect x="402" y="223" width="1" height="1" fill="#0040d0"/>
<rect x="405" y="223" width="1" height="1" fill="#0070ff"/>
<rect x="406" y="223" width="1" height="1" fill="#0070ff"/>
<rect x="410" y="223" width="1" height="1" fill="#0070ff"/>
<rect x="415" y="223" width="1" height="1" fill="#0040d0"/>
<rect x="416" y="223" width="1" height="1" fill="#0050f0"/>
<rect x="418" y="223" width="1" height="1" fill="#0070ff"/>
<rect x="426" y="223" width="1" height="1" fill="#0060ff"/>
<rect x="430" y="223" width="1" height="1" fill="#0040d0"/>
<rect x="433" y="223" width="1" height="1" fill="#0040d0"/>
<rect x="434" y="223" width="1" height="1" fill="#0050f0"/>
<rect x="435" y="223" width="1" height="1" fill="#0040d0"/>
<rect x="438" y="223" width="1" height="1" fill="#0050f0"/>
<rect x="440" y="223" width="1" height="1" fill="#0070ff"/>
<rect x="443" y="223" width="1" height="1" fill="#0050f0"/>
<rect x="445" y="223" width="1" height="1" fill="#0040d0"/>
<rect x="447" y="223" width="1" height="1" fill="#0060ff"/>
<rect x="452" y="223" width="1" height="1" fill="#0040d0"/>
<rect x="455" y="223" width="1" height="1" fill="#0060ff"/>
<rect x="462" y="223" width="1" height="1" fill="#0060ff"/>
<rect x="465" y="223" width="1" height="1" fill="#0060ff"/>
<rect x="466" y="223" width="1" height="1" fill="#0060ff"/>
<rect x="474" y="223" width="1" height="1" fill="#0040d0"/>
<rect x="477" y="223" width="1" height="1" fill="#0050f0"/>
<rect x="491" y="223" width="1" height="1" fill="#0070ff"/>
<rect x="495" y="223" width="1" height="1" fill="#0040d0"/>
<rect x="502" y="223" width="1" height="1" fill="#0070ff"/>
<rect x="515" y="223" width="1" height="1" fill="#0060ff"/>
<rect x="518" y="223" width="1" height="1" fill="#0060ff"/>
<rect x="520" y="223" width="1" height="1" fill="#0060ff"/>
<rect x="521" y="223" width="1" height="1" fill="#0040d0"/>
<rect x="319" y="204" width="1" height="1" fill="#0040c0"/>
<rect x="339" y="204" width="1" height="1" fill="#0048d0"/>
<rect x="342" y="204" width="1" height="1" fill="#0048d0"/>
<rect x="360" y="204" width="1" height="1" fill="#0040c0"/>
<rect x="362" y="204" width="1" height="1" fill="#0040c0"/>
<rect x="364" y="204" width="1" height="1" fill="#0048d0"/>
<rect x="378" y="204" width="1" height="1" fill="#0040c0"/>
<rect x="380" y="204" width="1" height="1" fill="#0048d0"/>
<rect x="389" y="204" width="1" height="1" fill="#0040c0"/>
<rect x="391" y="204" width="1" height="1" fill="#0048d0"/>
<rect x="393" y="204" width="1" height="1" fill="#0048d0"/>
<rect x="394" y="204" width="1" height="1" fill="#0040c0"/>
<rect x="396" y="204" width="1" height="1" fill="#0048d0"/>
<rect x="400" y="204" width="1" height="1" fill="#0040c0"/>
<rect x="407" y="204" width="1" height="1" fill="#0048d0"/>
<rect x="409" y="204" width="1" height="1" fill="#0048d0"/>
<rect x="410" y="204" width="1" height="1" fill="#0040c0"/>
<rect x="413" y="204" width="1" height="1" fill="#0040c0"/>
<rect x="417" y="204" width="1" height="1" fill="#0048d0"/>
<rect x="425" y="204" width="1" height="1" fill="#0040c0"/>
<rect x="428" y="204" width="1" height="1" fill="#0040c0"/>
<rect x="449" y="204" width="1" height="1" fill="#0048d0"/>
<rect x="454" y="204" width="1" height="1" fill="#0040c0"/>
<rect x="463" y="204" width="1" height="1" fill="#0048d0"/>
<rect x="503" y="204" width="1" height="1" fill="#0040c0"/>
<rect x="506" y="204" width="1" height="1" fill="#0048d0"/>
<rect x="527" y="204" width="1" height="1" fill="#0040c0"/>
<rect x="533" y="204" width="1" height="1" fill="#0040c0"/>
<rect x="535" y="204" width="1" height="1" fill="#0040c0"/>
<rect x="547" y="204" width="1" height="1" fill="#0048d0"/>
<rect x="550" y="204" width="1" height="1" fill="#0040c0"/>
<rect x="70" y="250" width="1" height="1" fill="#0050e0"/>
<rect x="74" y="249" width="1" height="1" fill="#0040d0"/>
<rect x="76" y="249" width="1" height="1" fill="#0040d0"/>
<rect x="84" y="248" width="1" height="1" fill="#0040d0"/>
<rect x="85" y="248" width="1" height="1" fill="#0048c8"/>
<rect x="86" y="248" width="1" height="1" fill="#0060f0"/>
<rect x="89" y="247" width="1" height="1" fill="#0050e0"/>
<rect x="90" y="247" width="1" height="1" fill="#0040d0"/>
<rect x="93" y="247" width="1" height="1" fill="#0048c8"/>
<rect x="99" y="246" width="1" height="1" fill="#0050e0"/>
<rect x="101" y="246" width="1" height="1" fill="#0048c8"/>
<rect x="105" y="245" width="1" height="1" fill="#0048c8"/>
<rect x="110" y="245" width="1" height="1" fill="#0040d0"/>
<rect x="111" y="245" width="1" height="1" fill="#0040d0"/>
<rect x="113" y="244" width="1" height="1" fill="#0040d0"/>
<rect x="114" y="244" width="1" height="1" fill="#0050e0"/>
<rect x="115" y="244" width="1" height="1" fill="#0060f0"/>
<rect x="119" y="243" width="1" height="1" fill="#0040d0"/>
<rect x="120" y="243" width="1" height="1" fill="#0048c8"/>
<rect x="122" y="243" width="1" height="1" fill="#0048c8"/>
<rect x="124" y="243" width="1" height="1" fill="#0060f0"/>
<rect x="128" y="242" width="1" height="1" fill="#0040d0"/>
<rect x="132" y="242" width="1" height="1" fill="#0050e0"/>
<rect x="133" y="242" width="1" height="1" fill="#0050e0"/>
<rect x="134" y="241" width="1" height="1" fill="#0060f0"/>
<rect x="135" y="241" width="1" height="1" fill="#0040d0"/>
<rect x="136" y="241" width="1" height="1" fill="#0048c8"/>
<rect x="137" y="241" width="1" height="1" fill="#0050e0"/>
<rect x="141" y="241" width="1" height="1" fill="#0040d0"/>
<rect x="142" y="240" width="1" height="1" fill="#0050e0"/>
<rect x="143" y="240" width="1" height="1" fill="#0040d0"/>
<rect x="146" y="240" width="1" height="1" fill="#0050e0"/>
<rect x="147" y="240" width="1" height="1" fill="#0048c8"/>
<rect x="152" y="239" width="1" height="1" fill="#0060f0"/>
<rect x="153" y="239" width="1" height="1" fill="#0040d0"/>
<rect x="154" y="239" width="1" height="1" fill="#0050e0"/>
<rect x="158" y="238" width="1" height="1" fill="#0048c8"/>
<rect x="159" y="238" width="1" height="1" fill="#0060f0"/>
<rect x="162" y="238" width="1" height="1" fill="#0048c8"/>
<rect x="164" y="237" width="1" height="1" fill="#0060f0"/>
<rect x="165" y="237" width="1" height="1" fill="#0060f0"/>
<rect x="175" y="236" width="1" height="1" fill="#0048c8"/>
<rect x="84" y="228" width="1" height="1" fill="#00ffb0"/>
<rect x="85" y="228" width="1" height="1" fill="#0090ff"/>
<rect x="86" y="228" width="1" height="1" fill="#00ffff"/>
<rect x="87" y="228" width="1" height="1" fill="#00ffff"/>
<rect x="88" y="228" width="1" height="1" fill="#00ffff"/>
<rect x="89" y="228" width="1" height="1" fill="#0030c0"/>
<rect x="90" y="228" width="1" height="1" fill="#0090ff"/>
<rect x="91" y="228" width="1" height="1" fill="#00ffff"/>
<rect x="92" y="228" width="1" height="1" fill="#0030c0"/>
<rect x="93" y="228" width="1" height="1" fill="#00ffff"/>
<rect x="94" y="228" width="1" height="1" fill="#00ffff"/>
<rect x="95" y="228" width="1" height="1" fill="#0030c0"/>
<rect x="96" y="228" width="1" height="1" fill="#0030c0"/>
<rect x="97" y="228" width="1" height="1" fill="#00ffff"/>
<rect x="98" y="228" width="1" height="1" fill="#00ffff"/>
<rect x="99" y="228" width="1" height="1" fill="#00ffb0"/>
<rect x="100" y="228" width="1" height="1" fill="#00ffff"/>
<rect x="101" y="228" width="1" height="1" fill="#00ffff"/>
<rect x="102" y="228" width="1" height="1" fill="#00ffff"/>
<rect x="103" y="228" width="1" height="1" fill="#00ffff"/>
<rect x="104" y="228" width="1" height="1" fill="#0090ff"/>
<rect x="105" y="228" width="1" height="1" fill="#0090ff"/>
<rect x="106" y="228" width="1" height="1" fill="#0090ff"/>
<rect x="107" y="228" width="1" height="1" fill="#00ffff"/>
<rect x="108" y="228" width="1" height="1" fill="#00ffff"/>
<rect x="109" y="228" width="1" height="1" fill="#00ffb0"/>
<rect x="110" y="228" width="1" height="1" fill="#00ffb0"/>
<rect x="111" y="228" width="1" height="1" fill="#00ffb0"/>
<rect x="112" y="228" width="1" height="1" fill="#00ffff"/>
<rect x="113" y="228" width="1" height="1" fill="#a0ff00"/>
<rect x="114" y="228" width="1" height="1" fill="#20ff40"/>
<rect x="115" y="228" width="1" height="1" fill="#a0ff00"/>
<rect x="116" y="228" width="1" height="1" fill="#0090ff"/>
<rect x="117" y="228" width="1" height="1" fill="#00ffb0"/>
<rect x="118" y="228" width="1" height="1" fill="#20ff40"/>
<rect x="119" y="228" width="1" height="1" fill="#0090ff"/>
<rect x="120" y="228" width="1" height="1" fill="#a0ff00"/>
<rect x="121" y="228" width="1" height="1" fill="#0030c0"/>
<rect x="122" y="228" width="1" height="1" fill="#00ffff"/>
<rect x="123" y="228" width="1" height="1" fill="#a0ff00"/>
<rect x="124" y="228" width="1" height="1" fill="#0030c0"/>
<rect x="125" y="228" width="1" height="1" fill="#0090ff"/>
<rect x="126" y="228" width="1" height="1" fill="#00ffb0"/>
<rect x="127" y="228" width="1" height="1" fill="#20ff40"/>
<rect x="128" y="228" width="1" height="1" fill="#0090ff"/>
<rect x="129" y="228" width="1" height="1" fill="#0090ff"/>
<rect x="130" y="228" width="1" height="1" fill="#a0ff00"/>
<rect x="131" y="228" width="1" height="1" fill="#00ffb0"/>
<rect x="132" y="228" width="1" height="1" fill="#00ffff"/>
<rect x="133" y="228" width="1" height="1" fill="#20ff40"/>
<rect x="134" y="228" width="1" height="1" fill="#00ffb0"/>
<rect x="135" y="228" width="1" height="1" fill="#20ff40"/>
<rect x="136" y="228" width="1" height="1" fill="#00ffb0"/>
<rect x="137" y="228" width="1" height="1" fill="#00ffb0"/>
<rect x="138" y="228" width="1" height="1" fill="#00ffb0"/>
<rect x="139" y="228" width="1" height="1" fill="#20ff40"/>
<rect x="140" y="228" width="1" height="1" fill="#0090ff"/>
<rect x="141" y="228" width="1" height="1" fill="#20ff40"/>
<rect x="142" y="228" width="1" height="1" fill="#a0ff00"/>
<rect x="143" y="228" width="1" height="1" fill="#00ffb0"/>
<rect x="144" y="228" width="1" height="1" fill="#00ffb0"/>
<rect x="145" y="228" width="1" height="1" fill="#0030c0"/>
<rect x="146" y="228" width="1" height="1" fill="#20ff40"/>
<rect x="147" y="228" width="1" height="1" fill="#20ff40"/>
<rect x="148" y="228" width="1" height="1" fill="#00ffb0"/>
<rect x="149" y="228" width="1" height="1" fill="#20ff40"/>
<rect x="150" y="228" width="1" height="1" fill="#20ff40"/>
<rect x="151" y="228" width="1" height="1" fill="#0090ff"/>
<rect x="152" y="228" width="1" height="1" fill="#00ffb0"/>
<rect x="153" y="228" width="1" height="1" fill="#0030c0"/>
<rect x="154" y="228" width="1" height="1" fill="#20ff40"/>
<rect x="155" y="228" width="1" height="1" fill="#20ff40"/>
<rect x="156" y="228" width="1" height="1" fill="#00ffb0"/>
<rect x="157" y="228" width="1" height="1" fill="#a0ff00"/>
<rect x="158" y="228" width="1" height="1" fill="#a0ff00"/>
<rect x="159" y="228" width="1" height="1" fill="#00ffff"/>
<rect x="160" y="228" width="1" height="1" fill="#00ffb0"/>
<rect x="161" y="228" width="1" height="1" fill="#00ffff"/>
<rect x="162" y="228" width="1" height="1" fill="#00ffff"/>
<rect x="163" y="228" width="1" height="1" fill="#00ffb0"/>
<rect x="164" y="228" width="1" height="1" fill="#00ffff"/>
<rect x="165" y="228" width="1" height="1" fill="#0030c0"/>
<rect x="166" y="228" width="1" height="1" fill="#20ff40"/>
<rect x="167" y="228" width="1" height="1" fill="#a0ff00"/>
<rect x="168" y="228" width="1" height="1" fill="#20ff40"/>
<rect x="169" y="228" width="1" height="1" fill="#00ffb0"/>
<rect x="170" y="228" width="1" height="1" fill="#00ffff"/>
<rect x="171" y="228" width="1" height="1" fill="#a0ff00"/>
<rect x="172" y="228" width="1" height="1" fill="#a0ff00"/>
<rect x="173" y="228" width="1" height="1" fill="#20ff40"/>
<rect x="174" y="228" width="1" height="1" fill="#00ffff"/>
<rect x="175" y="228" width="1" height="1" fill="#0090ff"/>
<rect x="176" y="228" width="1" height="1" fill="#20ff40"/>
<rect x="177" y="228" width="1" height="1" fill="#0030c0"/>
<rect x="178" y="228" width="1" height="1" fill="#00ffb0"/>
<rect x="179" y="228" width="1" height="1" fill="#0090ff"/>
<rect x="180" y="228" width="1" height="1" fill="#00ffff"/>
<rect x="181" y="228" width="1" height="1" fill="#20ff40"/>
<rect x="182" y="228" width="1" height="1" fill="#20ff40"/>
<rect x="183" y="228" width="1" height="1" fill="#20ff40"/>
<rect x="184" y="228" width="1" height="1" fill="#20ff40"/>
<rect x="185" y="228" width="1" height="1" fill="#20ff40"/>
<rect x="186" y="228" width="1" height="1" fill="#00ffb0"/>
<rect x="187" y="228" width="1" height="1" fill="#00ffb0"/>
<rect x="188" y="228" width="1" height="1" fill="#00ffb0"/>
<rect x="189" y="228" width="1" height="1" fill="#20ff40"/>
<rect x="190" y="228" width="1" height="1" fill="#20ff40"/>
<rect x="191" y="228" width="1" height="1" fill="#00ffb0"/>
<rect x="192" y="228" width="1" height="1" fill="#0090ff"/>
<rect x="193" y="228" width="1" height="1" fill="#00ffb0"/>
<rect x="194" y="228" width="1" height="1" fill="#20ff40"/>
<rect x="195" y="228" width="1" height="1" fill="#00ffff"/>
<rect x="196" y="228" width="1" height="1" fill="#a0ff00"/>
<rect x="197" y="228" width="1" height="1" fill="#0090ff"/>
<rect x="198" y="228" width="1" height="1" fill="#20ff40"/>
<rect x="199" y="228" width="1" height="1" fill="#0090ff"/>
<rect x="200" y="228" width="1" height="1" fill="#20ff40"/>
<rect x="201" y="228" width="1" height="1" fill="#00ffff"/>
<rect x="202" y="228" width="1" height="1" fill="#00ffb0"/>
<rect x="203" y="228" width="1" height="1" fill="#a0ff00"/>
<rect x="204" y="228" width="1" height="1" fill="#00ffb0"/>
<rect x="205" y="228" width="1" height="1" fill="#a0ff00"/>
<rect x="206" y="228" width="1" height="1" fill="#20ff40"/>
<rect x="207" y="228" width="1" height="1" fill="#00ffff"/>
<rect x="208" y="228" width="1" height="1" fill="#00ffff"/>
<rect x="209" y="228" width="1" height="1" fill="#20ff40"/>
<rect x="210" y="228" width="1" height="1" fill="#00ffb0"/>
<rect x="211" y="228" width="1" height="1" fill="#00ffb0"/>
<rect x="212" y="228" width="1" height="1" fill="#0090ff"/>
<rect x="213" y="228" width="1" height="1" fill="#20ff40"/>
<rect x="214" y="228" width="1" height="1" fill="#0090ff"/>
<rect x="215" y="228" width="1" height="1" fill="#a0ff00"/>
<rect x="216" y="228" width="1" height="1" fill="#00ffff"/>
<rect x="217" y="228" width="1" height="1" fill="#00ffb0"/>
<rect x="218" y="228" width="1" height="1" fill="#00ffff"/>
<rect x="219" y="228" width="1" height="1" fill="#a0ff00"/>
<rect x="220" y="228" width="1" height="1" fill="#00ffb0"/>
<rect x="221" y="228" width="1" height="1" fill="#00ffb0"/>
<rect x="222" y="228" width="1" height="1" fill="#0090ff"/>
<rect x="223" y="228" width="1" height="1" fill="#00ffb0"/>
<rect x="224" y="228" width="1" height="1" fill="#0030c0"/>
<rect x="225" y="228" width="1" height="1" fill="#20ff40"/>
<rect x="226" y="228" width="1" height="1" fill="#0090ff"/>
<rect x="227" y="228" width="1" height="1" fill="#0090ff"/>
<rect x="228" y="228" width="1" height="1" fill="#a0ff00"/>
<rect x="229" y="228" width="1" height="1" fill="#00ffb0"/>
<rect x="230" y="228" width="1" height="1" fill="#0030c0"/>
<rect x="231" y="228" width="1" height="1" fill="#00ffb0"/>
<rect x="232" y="228" width="1" height="1" fill="#00ffb0"/>
<rect x="233" y="228" width="1" height="1" fill="#20ff40"/>
<rect x="234" y="228" width="1" height="1" fill="#a0ff00"/>
<rect x="235" y="228" width="1" height="1" fill="#00ffff"/>
<rect x="236" y="228" width="1" height="1" fill="#20ff40"/>
<rect x="237" y="228" width="1" height="1" fill="#0090ff"/>
<rect x="238" y="228" width="1" height="1" fill="#00ffb0"/>
<rect x="239" y="228" width="1" height="1" fill="#00ffb0"/>
<rect x="240" y="228" width="1" height="1" fill="#20ff40"/>
<rect x="241" y="228" width="1" height="1" fill="#00ffb0"/>
<rect x="242" y="228" width="1" height="1" fill="#20ff40"/>
<rect x="243" y="228" width="1" height="1" fill="#20ff40"/>
<rect x="244" y="228" width="1" height="1" fill="#00ffff"/>
<rect x="245" y="228" width="1" height="1" fill="#00ff60"/>
<rect x="246" y="228" width="1" height="1" fill="#20ff40"/>
<rect x="247" y="228" width="1" height="1" fill="#00ffff"/>
<rect x="248" y="228" width="1" height="1" fill="#00ff60"/>
<rect x="249" y="228" width="1" height="1" fill="#00ffb0"/>
<rect x="250" y="228" width="1" height="1" fill="#0030c0"/>
<rect x="251" y="228" width="1" height="1" fill="#00ff60"/>
<rect x="252" y="228" width="1" height="1" fill="#00ffb0"/>
<rect x="253" y="228" width="1" height="1" fill="#00ff60"/>
<rect x="254" y="228" width="1" height="1" fill="#0090ff"/>
<rect x="255" y="228" width="1" height="1" fill="#00ffff"/>
<rect x="256" y="228" width="1" height="1" fill="#00ffff"/>
<rect x="257" y="228" width="1" height="1" fill="#0090ff"/>
<rect x="258" y="228" width="1" height="1" fill="#00ffb0"/>
<rect x="259" y="228" width="1" height="1" fill="#0090ff"/>
<rect x="260" y="228" width="1" height="1" fill="#20ff40"/>
<rect x="261" y="228" width="1" height="1" fill="#80ff40"/>
<rect x="262" y="228" width="1" height="1" fill="#00ff60"/>
<rect x="263" y="228" width="1" height="1" fill="#80ff40"/>
<rect x="264" y="228" width="1" height="1" fill="#00ffb0"/>
<rect x="265" y="228" width="1" height="1" fill="#20ff40"/>
<rect x="266" y="228" width="1" height="1" fill="#20ff40"/>
<rect x="267" y="228" width="1" height="1" fill="#20ff40"/>
<rect x="268" y="228" width="1" height="1" fill="#0090ff"/>
<rect x="269" y="228" width="1" height="1" fill="#00ff60"/>
<rect x="270" y="228" width="1" height="1" fill="#00ffff"/>
<rect x="271" y="228" width="1" height="1" fill="#0090ff"/>
<rect x="272" y="228" width="1" height="1" fill="#80ff40"/>
<rect x="273" y="228" width="1" height="1" fill="#80ff40"/>
<rect x="274" y="228" width="1" height="1" fill="#0090ff"/>
<rect x="275" y="228" width="1" height="1" fill="#00ff60"/>
<rect x="276" y="228" width="1" height="1" fill="#00ffb0"/>
<rect x="277" y="228" width="1" height="1" fill="#00ffff"/>
<rect x="278" y="228" width="1" height="1" fill="#00ffb0"/>
<rect x="279" y="228" width="1" height="1" fill="#00ffb0"/>
<rect x="280" y="228" width="1" height="1" fill="#00ff60"/>
<rect x="281" y="228" width="1" height="1" fill="#0090ff"/>
<rect x="282" y="228" width="1" height="1" fill="#00ff60"/>
<rect x="283" y="228" width="1" height="1" fill="#0030c0"/>
<rect x="284" y="228" width="1" height="1" fill="#20ff40"/>
<rect x="285" y="228" width="1" height="1" fill="#20ff40"/>
<rect x="286" y="228" width="1" height="1" fill="#00ffb0"/>
<rect x="287" y="228" width="1" height="1" fill="#00ffff"/>
<rect x="288" y="228" width="1" height="1" fill="#00ff60"/>
<rect x="289" y="228" width="1" height="1" fill="#20ff40"/>
<rect x="290" y="228" width="1" height="1" fill="#00ff60"/>
<rect x="291" y="228" width="1" height="1" fill="#00ffb0"/>
<rect x="292" y="228" width="1" height="1" fill="#00ffb0"/>
<rect x="293" y="228" width="1" height="1" fill="#0030c0"/>
<rect x="294" y="228" width="1" height="1" fill="#00ff60"/>
<rect x="295" y="228" width="1" height="1" fill="#20ff40"/>
<rect x="296" y="228" width="1" height="1" fill="#80ff40"/>
<rect x="297" y="228" width="1" height="1" fill="#00ffb0"/>
<rect x="298" y="228" width="1" height="1" fill="#00ffb0"/>
<rect x="299" y="228" width="1" height="1" fill="#0090ff"/>
<rect x="300" y="228" width="1" height="1" fill="#20ff40"/>
<rect x="301" y="228" width="1" height="1" fill="#20ff40"/>
<rect x="302" y="228" width="1" height="1" fill="#00ffb0"/>
<rect x="303" y="228" width="1" height="1" fill="#0090ff"/>
<rect x="304" y="228" width="1" height="1" fill="#20ff40"/>
<rect x="305" y="228" width="1" height="1" fill="#00ffb0"/>
<rect x="306" y="228" width="1" height="1" fill="#0030c0"/>
<rect x="307" y="228" width="1" height="1" fill="#0090ff"/>
<rect x="308" y="228" width="1" height="1" fill="#0090ff"/>
<rect x="309" y="228" width="1" height="1" fill="#00ff60"/>
<rect x="310" y="228" width="1" height="1" fill="#80ff40"/>
<rect x="311" y="228" width="1" height="1" fill="#80ff40"/>
<rect x="312" y="228" width="1" height="1" fill="#00ffb0"/>
<rect x="313" y="228" width="1" height="1" fill="#0090ff"/>
<rect x="314" y="228" width="1" height="1" fill="#20ff40"/>
<rect x="315" y="228" width="1" height="1" fill="#20ff40"/>
<rect x="316" y="228" width="1" height="1" fill="#0030c0"/>
<rect x="317" y="228" width="1" height="1" fill="#00ffb0"/>
<rect x="318" y="228" width="1" height="1" fill="#00ffb0"/>
<rect x="319" y="228" width="1" height="1" fill="#80ff40"/>
<rect x="320" y="228" width="1" height="1" fill="#00ffb0"/>
<rect x="321" y="228" width="1" height="1" fill="#0030c0"/>
<rect x="322" y="228" width="1" height="1" fill="#20ff40"/>
<rect x="323" y="228" width="1" height="1" fill="#0030c0"/>
<rect x="324" y="228" width="1" height="1" fill="#20ff40"/>
<rect x="325" y="228" width="1" height="1" fill="#20ff40"/>
<rect x="326" y="228" width="1" height="1" fill="#00ffb0"/>
<rect x="327" y="228" width="1" height="1" fill="#0030c0"/>
<rect x="328" y="228" width="1" height="1" fill="#80ff40"/>
<rect x="329" y="228" width="1" height="1" fill="#00ffb0"/>
<rect x="330" y="228" width="1" height="1" fill="#0090ff"/>
<rect x="331" y="228" width="1" height="1" fill="#00ffb0"/>
<rect x="332" y="228" width="1" height="1" fill="#00ff60"/>
<rect x="333" y="228" width="1" height="1" fill="#00ffb0"/>
<rect x="334" y="228" width="1" height="1" fill="#00ffb0"/>
<rect x="335" y="228" width="1" height="1" fill="#0090ff"/>
<rect x="336" y="228" width="1" height="1" fill="#20ff40"/>
<rect x="337" y="228" width="1" height="1" fill="#80ff40"/>
<rect x="338" y="228" width="1" height="1" fill="#00ffff"/>
<rect x="339" y="228" width="1" height="1" fill="#0030c0"/>
<rect x="340" y="228" width="1" height="1" fill="#80ff40"/>
<rect x="341" y="228" width="1" height="1" fill="#20ff40"/>
<rect x="342" y="228" width="1" height="1" fill="#00ffb0"/>
<rect x="343" y="228" width="1" height="1" fill="#0090ff"/>
<rect x="344" y="228" width="1" height="1" fill="#00ffb0"/>
<rect x="345" y="228" width="1" height="1" fill="#20ff40"/>
<rect x="346" y="228" width="1" height="1" fill="#80ff40"/>
<rect x="347" y="228" width="1" height="1" fill="#00ffb0"/>
<rect x="348" y="228" width="1" height="1" fill="#0090ff"/>
<rect x="349" y="228" width="1" height="1" fill="#00ffb0"/>
<rect x="350" y="228" width="1" height="1" fill="#00ff60"/>
<rect x="351" y="228" width="1" height="1" fill="#00ff60"/>
<rect x="352" y="228" width="1" height="1" fill="#00ff60"/>
<rect x="353" y="228" width="1" height="1" fill="#00ffff"/>
<rect x="354" y="228" width="1" height="1" fill="#00ff60"/>
<rect x="355" y="228" width="1" height="1" fill="#0090ff"/>
<rect x="356" y="228" width="1" height="1" fill="#0090ff"/>
<rect x="357" y="228" width="1" height="1" fill="#00ffff"/>
<rect x="358" y="228" width="1" height="1" fill="#80ff40"/>
<rect x="359" y="228" width="1" height="1" fill="#00ffb0"/>
<rect x="360" y="228" width="1" height="1" fill="#0090ff"/>
<rect x="361" y="228" width="1" height="1" fill="#20ff40"/>
<rect x="362" y="228" width="1" height="1" fill="#00ffb0"/>
<rect x="363" y="228" width="1" height="1" fill="#0030c0"/>
<rect x="364" y="228" width="1" height="1" fill="#00ffb0"/>
<rect x="365" y="228" width="1" height="1" fill="#00ff60"/>
<rect x="366" y="228" width="1" height="1" fill="#00ffff"/>
<rect x="367" y="228" width="1" height="1" fill="#00ffb0"/>
<rect x="368" y="228" width="1" height="1" fill="#00ffff"/>
<rect x="369" y="228" width="1" height="1" fill="#0090ff"/>
<rect x="370" y="228" width="1" height="1" fill="#00ffb0"/>
<rect x="371" y="228" width="1" height="1" fill="#00ffff"/>
<rect x="372" y="228" width="1" height="1" fill="#00ffb0"/>
<rect x="373" y="228" width="1" height="1" fill="#20ff40"/>
<rect x="374" y="228" width="1" height="1" fill="#00ffb0"/>
<rect x="375" y="228" width="1" height="1" fill="#00ff80"/>
<rect x="376" y="228" width="1" height="1" fill="#00ffb0"/>
<rect x="377" y="228" width="1" height="1" fill="#00d0ff"/>
<rect x="378" y="228" width="1" height="1" fill="#0090ff"/>
<rect x="379" y="228" width="1" height="1" fill="#00d0ff"/>
<rect x="380" y="228" width="1" height="1" fill="#0050ff"/>
<rect x="381" y="228" width="1" height="1" fill="#20ff40"/>
<rect x="382" y="228" width="1" height="1" fill="#0030c0"/>
<rect x="383" y="228" width="1" height="1" fill="#20ff40"/>
<rect x="384" y="228" width="1" height="1" fill="#00ffb0"/>
<rect x="385" y="228" width="1" height="1" fill="#0090ff"/>
<rect x="386" y="228" width="1" height="1" fill="#00ffb0"/>
<rect x="387" y="228" width="1" height="1" fill="#0030c0"/>
<rect x="388" y="228" width="1" height="1" fill="#0050ff"/>
<rect x="389" y="228" width="1" height="1" fill="#00ffb0"/>
<rect x="390" y="228" width="1" height="1" fill="#00ff80"/>
<rect x="391" y="228" width="1" height="1" fill="#00d0ff"/>
<rect x="392" y="228" width="1" height="1" fill="#00ffb0"/>
<rect x="393" y="228" width="1" height="1" fill="#00ffb0"/>
<rect x="394" y="228" width="1" height="1" fill="#00ffb0"/>
<rect x="395" y="228" width="1" height="1" fill="#00ffff"/>
<rect x="396" y="228" width="1" height="1" fill="#00ffff"/>
<rect x="397" y="228" width="1" height="1" fill="#00d0ff"/>
<rect x="398" y="228" width="1" height="1" fill="#0090ff"/>
<rect x="399" y="228" width="1" height="1" fill="#00d0ff"/>
<rect x="400" y="228" width="1" height="1" fill="#0050ff"/>
<rect x="401" y="228" width="1" height="1" fill="#0050ff"/>
<rect x="402" y="228" width="1" height="1" fill="#00ffb0"/>
<rect x="403" y="228" width="1" height="1" fill="#00ffb0"/>
<rect x="404" y="228" width="1" height="1" fill="#00ff80"/>
<rect x="405" y="228" width="1" height="1" fill="#00ffff"/>
<rect x="406" y="228" width="1" height="1" fill="#00ffb0"/>
<rect x="407" y="228" width="1" height="1" fill="#0090ff"/>
<rect x="408" y="228" width="1" height="1" fill="#00d0ff"/>
<rect x="409" y="228" width="1" height="1" fill="#0090ff"/>
<rect x="410" y="228" width="1" height="1" fill="#00ffb0"/>
<rect x="411" y="228" width="1" height="1" fill="#00d0ff"/>
<rect x="412" y="228" width="1" height="1" fill="#00d0ff"/>
<rect x="413" y="228" width="1" height="1" fill="#00ff80"/>
<rect x="414" y="228" width="1" height="1" fill="#00ffb0"/>
<rect x="415" y="228" width="1" height="1" fill="#0090ff"/>
<rect x="416" y="228" width="1" height="1" fill="#20ff40"/>
<rect x="417" y="228" width="1" height="1" fill="#20ff40"/>
<rect x="418" y="228" width="1" height="1" fill="#20ff40"/>
<rect x="419" y="228" width="1" height="1" fill="#00ff80"/>
<rect x="420" y="228" width="1" height="1" fill="#0090ff"/>
<rect x="421" y="228" width="1" height="1" fill="#00ffb0"/>
<rect x="422" y="228" width="1" height="1" fill="#0050ff"/>
<rect x="423" y="228" width="1" height="1" fill="#00ff80"/>
<rect x="424" y="228" width="1" height="1" fill="#00ffb0"/>
<rect x="425" y="228" width="1" height="1" fill="#00ff80"/>
<rect x="426" y="228" width="1" height="1" fill="#0050ff"/>
<rect x="427" y="228" width="1" height="1" fill="#20ff40"/>
<rect x="428" y="228" width="1" height="1" fill="#0050ff"/>
<rect x="429" y="228" width="1" height="1" fill="#00ff80"/>
<rect x="430" y="228" width="1" height="1" fill="#00ff80"/>
<rect x="431" y="228" width="1" height="1" fill="#20ff40"/>
<rect x="432" y="228" width="1" height="1" fill="#00d0ff"/>
<rect x="433" y="228" width="1" height="1" fill="#00ffff"/>
<rect x="434" y="228" width="1" height="1" fill="#00ffb0"/>
<rect x="435" y="228" width="1" height="1" fill="#20ff40"/>
<rect x="436" y="228" width="1" height="1" fill="#0030c0"/>
<rect x="437" y="228" width="1" height="1" fill="#00ffb0"/>
<rect x="438" y="228" width="1" height="1" fill="#20ff40"/>
<rect x="439" y="228" width="1" height="1" fill="#00ff80"/>
<rect x="440" y="228" width="1" height="1" fill="#00ff80"/>
<rect x="441" y="228" width="1" height="1" fill="#00ffb0"/>
<rect x="442" y="228" width="1" height="1" fill="#20ff40"/>
<rect x="443" y="228" width="1" height="1" fill="#0030c0"/>
<rect x="444" y="228" width="1" height="1" fill="#0090ff"/>
<rect x="445" y="228" width="1" height="1" fill="#00ffff"/>
<rect x="446" y="228" width="1" height="1" fill="#00d0ff"/>
<rect x="447" y="228" width="1" height="1" fill="#00d0ff"/>
<rect x="448" y="228" width="1" height="1" fill="#00ffb0"/>
<rect x="449" y="228" width="1" height="1" fill="#00ffb0"/>
<rect x="450" y="228" width="1" height="1" fill="#00d0ff"/>
<rect x="451" y="228" width="1" height="1" fill="#00ff80"/>
<rect x="452" y="228" width="1" height="1" fill="#00ff80"/>
<rect x="453" y="228" width="1" height="1" fill="#0030c0"/>
<rect x="454" y="228" width="1" height="1" fill="#00d0ff"/>
<rect x="455" y="228" width="1" height="1" fill="#00d0ff"/>
<rect x="456" y="228" width="1" height="1" fill="#00ff80"/>
<rect x="457" y="228" width="1" height="1" fill="#00ff80"/>
<rect x="458" y="228" width="1" height="1" fill="#00ffff"/>
<rect x="459" y="228" width="1" height="1" fill="#0030c0"/>
<rect x="460" y="228" width="1" height="1" fill="#00ff80"/>
<rect x="461" y="228" width="1" height="1" fill="#00ffb0"/>
<rect x="462" y="228" width="1" height="1" fill="#00ff80"/>
<rect x="463" y="228" width="1" height="1" fill="#0050ff"/>
<rect x="464" y="228" width="1" height="1" fill="#00ffff"/>
<rect x="465" y="228" width="1" height="1" fill="#00ffb0"/>
<rect x="466" y="228" width="1" height="1" fill="#00ffb0"/>
<rect x="467" y="228" width="1" height="1" fill="#00d0ff"/>
<rect x="468" y="228" width="1" height="1" fill="#00ffb0"/>
<rect x="469" y="228" width="1" height="1" fill="#00ff80"/>
<rect x="470" y="228" width="1" height="1" fill="#00ff80"/>
<rect x="471" y="228" width="1" height="1" fill="#00ff80"/>
<rect x="472" y="228" width="1" height="1" fill="#00d0ff"/>
<rect x="473" y="228" width="1" height="1" fill="#20ff40"/>
<rect x="474" y="228" width="1" height="1" fill="#00ff80"/>
<rect x="475" y="228" width="1" height="1" fill="#00ffff"/>
<rect x="476" y="228" width="1" height="1" fill="#0090ff"/>
<rect x="477" y="228" width="1" height="1" fill="#00ffff"/>
<rect x="478" y="228" width="1" height="1" fill="#0090ff"/>
<rect x="479" y="228" width="1" height="1" fill="#00ffff"/>
<rect x="480" y="228" width="1" height="1" fill="#20ff40"/>
<rect x="481" y="228" width="1" height="1" fill="#0050ff"/>
<rect x="482" y="228" width="1" height="1" fill="#00ffb0"/>
<rect x="483" y="228" width="1" height="1" fill="#0050ff"/>
<rect x="484" y="228" width="1" height="1" fill="#0030c0"/>
<rect x="485" y="228" width="1" height="1" fill="#00ffb0"/>
<rect x="486" y="228" width="1" height="1" fill="#0050ff"/>
<rect x="487" y="228" width="1" height="1" fill="#0030c0"/>
<rect x="488" y="228" width="1" height="1" fill="#00d0ff"/>
<rect x="489" y="228" width="1" height="1" fill="#00ffb0"/>
<rect x="490" y="228" width="1" height="1" fill="#00ffb0"/>
<rect x="491" y="228" width="1" height="1" fill="#00ff80"/>
<rect x="492" y="228" width="1" height="1" fill="#00d0ff"/>
<rect x="493" y="228" width="1" height="1" fill="#00ffb0"/>
<rect x="494" y="228" width="1" height="1" fill="#20ff40"/>
<rect x="495" y="228" width="1" height="1" fill="#20ff40"/>
<rect x="496" y="228" width="1" height="1" fill="#0050ff"/>
<rect x="497" y="228" width="1" height="1" fill="#0030c0"/>
<rect x="498" y="228" width="1" height="1" fill="#00ffb0"/>
<rect x="499" y="228" width="1" height="1" fill="#0030c0"/>
<rect x="500" y="228" width="1" height="1" fill="#00ffff"/>
<rect x="501" y="228" width="1" height="1" fill="#00ffff"/>
<rect x="502" y="228" width="1" height="1" fill="#0030c0"/>
<rect x="503" y="228" width="1" height="1" fill="#00ffb0"/>
<rect x="504" y="228" width="1" height="1" fill="#0090ff"/>
<rect x="505" y="228" width="1" height="1" fill="#0030c0"/>
<rect x="506" y="228" width="1" height="1" fill="#20ff40"/>
<rect x="507" y="228" width="1" height="1" fill="#0090ff"/>
<rect x="508" y="228" width="1" height="1" fill="#0030c0"/>
<rect x="509" y="228" width="1" height="1" fill="#00ffb0"/>
<rect x="510" y="228" width="1" height="1" fill="#20ff40"/>
<rect x="511" y="228" width="1" height="1" fill="#0030c0"/>
<rect x="512" y="228" width="1" height="1" fill="#00ffb0"/>
<rect x="513" y="228" width="1" height="1" fill="#20ff40"/>
<rect x="514" y="228" width="1" height="1" fill="#a0ff00"/>
<rect x="515" y="228" width="1" height="1" fill="#a0ff00"/>
<rect x="516" y="228" width="1" height="1" fill="#00ffb0"/>
<rect x="517" y="228" width="1" height="1" fill="#0030c0"/>
<rect x="518" y="228" width="1" height="1" fill="#20ff40"/>
<rect x="519" y="228" width="1" height="1" fill="#20ff40"/>
<rect x="520" y="228" width="1" height="1" fill="#00ffb0"/>
<rect x="521" y="228" width="1" height="1" fill="#0090ff"/>
<rect x="522" y="228" width="1" height="1" fill="#00ffb0"/>
<rect x="523" y="228" width="1" height="1" fill="#00ffb0"/>
<rect x="524" y="228" width="1" height="1" fill="#00ffb0"/>
<rect x="525" y="228" width="1" height="1" fill="#00ffff"/>
<rect x="526" y="228" width="1" height="1" fill="#a0ff00"/>
<rect x="527" y="228" width="1" height="1" fill="#0090ff"/>
<rect x="528" y="228" width="1" height="1" fill="#a0ff00"/>
<rect x="529" y="228" width="1" height="1" fill="#00ffff"/>
<rect x="530" y="228" width="1" height="1" fill="#00ffff"/>
<rect x="531" y="228" width="1" height="1" fill="#a0ff00"/>
<rect x="532" y="228" width="1" height="1" fill="#20ff40"/>
<rect x="533" y="228" width="1" height="1" fill="#00ffb0"/>
<rect x="534" y="228" width="1" height="1" fill="#a0ff00"/>
<rect x="535" y="228" width="1" height="1" fill="#20ff40"/>
<rect x="536" y="228" width="1" height="1" fill="#00ffb0"/>
<rect x="537" y="228" width="1" height="1" fill="#20ff40"/>
<rect x="538" y="228" width="1" height="1" fill="#0090ff"/>
<rect x="539" y="228" width="1" height="1" fill="#00ffb0"/>
<rect x="540" y="228" width="1" height="1" fill="#0090ff"/>
<rect x="541" y="228" width="1" height="1" fill="#00ffb0"/>
<rect x="542" y="228" width="1" height="1" fill="#00ffb0"/>
<rect x="543" y="228" width="1" height="1" fill="#00ffb0"/>
<rect x="544" y="228" width="1" height="1" fill="#00ffb0"/>
<rect x="545" y="228" width="1" height="1" fill="#00ffff"/>
<rect x="546" y="228" width="1" height="1" fill="#00ffb0"/>
<rect x="547" y="228" width="1" height="1" fill="#00ffb0"/>
<rect x="548" y="228" width="1" height="1" fill="#00ffff"/>
<rect x="549" y="228" width="1" height="1" fill="#00ffff"/>
<rect x="550" y="228" width="1" height="1" fill="#a0ff00"/>
<rect x="551" y="228" width="1" height="1" fill="#00ffb0"/>
<rect x="552" y="228" width="1" height="1" fill="#0030c0"/>
<rect x="553" y="228" width="1" height="1" fill="#0090ff"/>
<rect x="554" y="228" width="1" height="1" fill="#00ffff"/>
<rect x="555" y="228" width="1" height="1" fill="#00ffb0"/>
<rect x="556" y="228" width="1" height="1" fill="#00ffff"/>
<rect x="557" y="228" width="1" height="1" fill="#00ffb0"/>
<rect x="558" y="228" width="1" height="1" fill="#0090ff"/>
<rect x="559" y="228" width="1" height="1" fill="#20ff40"/>
<rect x="560" y="228" width="1" height="1" fill="#00ffff"/>
<rect x="561" y="228" width="1" height="1" fill="#20ff40"/>
<rect x="562" y="228" width="1" height="1" fill="#0030c0"/>
<rect x="563" y="228" width="1" height="1" fill="#0090ff"/>
<rect x="564" y="228" width="1" height="1" fill="#00ffb0"/>
<rect x="565" y="228" width="1" height="1" fill="#00ffff"/>
<rect x="566" y="228" width="1" height="1" fill="#20ff40"/>
<rect x="567" y="228" width="1" height="1" fill="#00ffff"/>
<rect x="568" y="228" width="1" height="1" fill="#a0ff00"/>
<rect x="569" y="228" width="1" height="1" fill="#00ffb0"/>
<rect x="570" y="228" width="1" height="1" fill="#00ffff"/>
<rect x="571" y="228" width="1" height="1" fill="#a0ff00"/>
<rect x="572" y="228" width="1" height="1" fill="#00ffff"/>
<rect x="573" y="228" width="1" height="1" fill="#a0ff00"/>
<rect x="574" y="228" width="1" height="1" fill="#00ffb0"/>
<rect x="575" y="228" width="1" height="1" fill="#00ffff"/>
<rect x="576" y="228" width="1" height="1" fill="#a0ff00"/>
<rect x="577" y="228" width="1" height="1" fill="#a0ff00"/>
<rect x="578" y="228" width="1" height="1" fill="#20ff40"/>
<rect x="579" y="228" width="1" height="1" fill="#00ffff"/>
<rect x="580" y="228" width="1" height="1" fill="#00ffb0"/>
<rect x="581" y="228" width="1" height="1" fill="#a0ff00"/>
<rect x="582" y="228" width="1" height="1" fill="#0090ff"/>
<rect x="583" y="228" width="1" height="1" fill="#a0ff00"/>
<rect x="584" y="228" width="1" height="1" fill="#00ffb0"/>
<rect x="585" y="228" width="1" height="1" fill="#a0ff00"/>
<rect x="586" y="228" width="1" height="1" fill="#a0ff00"/>
<rect x="587" y="228" width="1" height="1" fill="#00ffff"/>
<rect x="588" y="228" width="1" height="1" fill="#0090ff"/>
<rect x="589" y="228" width="1" height="1" fill="#00ffb0"/>
<rect x="590" y="228" width="1" height="1" fill="#00ffff"/>
<rect x="591" y="228" width="1" height="1" fill="#20ff40"/>
<rect x="592" y="228" width="1" height="1" fill="#a0ff00"/>
<rect x="593" y="228" width="1" height="1" fill="#00ffb0"/>
<rect x="594" y="228" width="1" height="1" fill="#20ff40"/>
<rect x="595" y="228" width="1" height="1" fill="#00ffb0"/>
<rect x="596" y="228" width="1" height="1" fill="#00ffb0"/>
<rect x="597" y="228" width="1" height="1" fill="#00ffff"/>
<rect x="598" y="228" width="1" height="1" fill="#a0ff00"/>
<rect x="599" y="228" width="1" height="1" fill="#00ffb0"/>
<rect x="600" y="228" width="1" height="1" fill="#00ffff"/>
<rect x="601" y="228" width="1" height="1" fill="#a0ff00"/>
<rect x="602" y="228" width="1" height="1" fill="#00ffb0"/>
<rect x="603" y="228" width="1" height="1" fill="#a0ff00"/>
<rect x="604" y="228" width="1" height="1" fill="#20ff40"/>
<rect x="605" y="228" width="1" height="1" fill="#00ffb0"/>
<rect x="606" y="228" width="1" height="1" fill="#00ffb0"/>
<rect x="607" y="228" width="1" height="1" fill="#00ffb0"/>
<rect x="608" y="228" width="1" height="1" fill="#a0ff00"/>
<rect x="609" y="228" width="1" height="1" fill="#0030c0"/>
<rect x="610" y="228" width="1" height="1" fill="#00ffb0"/>
<rect x="611" y="228" width="1" height="1" fill="#0090ff"/>
<rect x="612" y="228" width="1" height="1" fill="#00ffb0"/>
<rect x="613" y="228" width="1" height="1" fill="#0030c0"/>
<rect x="614" y="228" width="1" height="1" fill="#00ffb0"/>
<rect x="615" y="228" width="1" height="1" fill="#0030c0"/>
<rect x="616" y="228" width="1" height="1" fill="#0090ff"/>
<rect x="617" y="228" width="1" height="1" fill="#00ffb0"/>
<rect x="618" y="228" width="1" height="1" fill="#20ff40"/>
<rect x="619" y="228" width="1" height="1" fill="#20ff40"/>
<rect x="82" y="227" width="1" height="1" fill="#00ffff"/>
<rect x="83" y="229" width="1" height="1" fill="#0090ff"/>
<rect x="590" y="228" width="1" height="1" fill="#ffff00"/>
<rect x="591" y="228" width="1" height="1" fill="#00ffb0"/>
<rect x="592" y="228" width="1" height="1" fill="#00ffb0"/>
<rect x="593" y="228" width="1" height="1" fill="#20ff40"/>
<rect x="594" y="228" width="1" height="1" fill="#00ffb0"/>
<rect x="595" y="228" width="1" height="1" fill="#00ffb0"/>
<rect x="596" y="228" width="1" height="1" fill="#ffff00"/>
<rect x="597" y="228" width="1" height="1" fill="#a0ff00"/>
<rect x="598" y="228" width="1" height="1" fill="#a0ff00"/>
<rect x="599" y="228" width="1" height="1" fill="#00ffb0"/>
<rect x="600" y="228" width="1" height="1" fill="#00ffb0"/>
<rect x="601" y="228" width="1" height="1" fill="#ffff00"/>
<rect x="602" y="228" width="1" height="1" fill="#00ffb0"/>
<rect x="603" y="228" width="1" height="1" fill="#ff3030"/>
<rect x="604" y="228" width="1" height="1" fill="#ff1060"/>
<rect x="605" y="228" width="1" height="1" fill="#ff1060"/>
<rect x="606" y="228" width="1" height="1" fill="#ff1060"/>
<rect x="607" y="228" width="1" height="1" fill="#ff1060"/>
<rect x="608" y="228" width="1" height="1" fill="#ff1060"/>
<rect x="609" y="228" width="1" height="1" fill="#ff1060"/>
<rect x="610" y="228" width="1" height="1" fill="#ffff00"/>
<rect x="611" y="228" width="1" height="1" fill="#ffff00"/>
<rect x="612" y="228" width="1" height="1" fill="#ffff00"/>
<rect x="613" y="228" width="1" height="1" fill="#ffff00"/>
<rect x="614" y="228" width="1" height="1" fill="#a0ff00"/>
<rect x="615" y="228" width="1" height="1" fill="#ffff00"/>
<rect x="616" y="228" width="1" height="1" fill="#20ff40"/>
<rect x="617" y="228" width="1" height="1" fill="#20ff40"/>
<rect x="618" y="228" width="1" height="1" fill="#00ffff"/>
<rect x="619" y="228" width="1" height="1" fill="#00ffff"/>
<rect x="593" y="227" width="1" height="1" fill="#20ff40"/>
<rect x="594" y="227" width="1" height="1" fill="#20ff40"/>
<rect x="595" y="227" width="1" height="1" fill="#00ffb0"/>
<rect x="596" y="227" width="1" height="1" fill="#20ff40"/>
<rect x="597" y="227" width="1" height="1" fill="#20ff40"/>
<rect x="612" y="229" width="1" height="1" fill="#0090ff"/>
<rect x="613" y="229" width="1" height="1" fill="#00ffff"/>
<rect x="614" y="229" width="1" height="1" fill="#00ffff"/>
<rect x="615" y="229" width="1" height="1" fill="#00ffff"/>
<rect x="616" y="229" width="1" height="1" fill="#00ffff"/>
<rect x="617" y="229" width="1" height="1" fill="#00ffff"/>
<rect x="618" y="229" width="1" height="1" fill="#00ffff"/>
<rect x="619" y="229" width="1" height="1" fill="#0090ff"/>
<rect x="105" y="228" width="1" height="1" fill="#00ffff"/>
<rect x="106" y="228" width="1" height="1" fill="#00ffff"/>
<rect x="107" y="228" width="1" height="1" fill="#00ffff"/>
<rect x="108" y="228" width="1" height="1" fill="#00ffff"/>
<rect x="109" y="228" width="1" height="1" fill="#00ffff"/>
<rect x="110" y="228" width="1" height="1" fill="#00ffff"/>
<rect x="111" y="228" width="1" height="1" fill="#00ffff"/>
<rect x="112" y="228" width="1" height="1" fill="#00ffff"/>
<rect x="112" y="228" width="1" height="1" fill="#a0ff00"/>
<rect x="113" y="228" width="1" height="1" fill="#00ffb0"/>
<rect x="114" y="228" width="1" height="1" fill="#00ffb0"/>
<rect x="115" y="228" width="1" height="1" fill="#20ff40"/>
<rect x="116" y="228" width="1" height="1" fill="#00ffb0"/>
<rect x="117" y="228" width="1" height="1" fill="#a0ff00"/>
<rect x="118" y="228" width="1" height="1" fill="#00ffb0"/>
<rect x="119" y="228" width="1" height="1" fill="#20ff40"/>
<rect x="120" y="228" width="1" height="1" fill="#a0ff00"/>
<rect x="120" y="228" width="1" height="1" fill="#a0ff00"/>
<rect x="121" y="228" width="1" height="1" fill="#20ff40"/>
<rect x="122" y="228" width="1" height="1" fill="#20ff40"/>
<rect x="123" y="228" width="1" height="1" fill="#ffff00"/>
<rect x="124" y="228" width="1" height="1" fill="#a0ff00"/>
<rect x="125" y="228" width="1" height="1" fill="#a0ff00"/>
<rect x="126" y="228" width="1" height="1" fill="#ffff00"/>
<rect x="127" y="228" width="1" height="1" fill="#ff1060"/>
<rect x="128" y="228" width="1" height="1" fill="#ff1060"/>
<rect x="129" y="228" width="1" height="1" fill="#ff1060"/>
<rect x="130" y="228" width="1" height="1" fill="#0020a0"/>
<rect x="131" y="228" width="1" height="1" fill="#ffff00"/>
<rect x="132" y="228" width="1" height="1" fill="#20ff40"/>
<rect x="133" y="228" width="1" height="1" fill="#a0ff00"/>
<rect x="134" y="228" width="1" height="1" fill="#20ff40"/>
<rect x="135" y="228" width="1" height="1" fill="#a0ff00"/>
<rect x="136" y="228" width="1" height="1" fill="#a0ff00"/>
<rect x="137" y="228" width="1" height="1" fill="#ffff00"/>
<rect x="138" y="228" width="1" height="1" fill="#a0ff00"/>
<rect x="139" y="228" width="1" height="1" fill="#00ffff"/>
<rect x="140" y="228" width="1" height="1" fill="#00ffff"/>
<rect x="141" y="228" width="1" height="1" fill="#00ffb0"/>
<rect x="142" y="228" width="1" height="1" fill="#00ffb0"/>
<rect x="143" y="228" width="1" height="1" fill="#00ffff"/>
<rect x="144" y="228" width="1" height="1" fill="#00ffb0"/>
<rect x="145" y="228" width="1" height="1" fill="#00ffb0"/>
<rect x="113" y="225" width="1" height="1" fill="#00ffb0"/>
<rect x="114" y="225" width="1" height="1" fill="#00ffb0"/>
<rect x="115" y="225" width="1" height="1" fill="#00ffb0"/>
<rect x="116" y="225" width="1" height="1" fill="#00ffb0"/>
<rect x="117" y="225" width="1" height="1" fill="#00ffff"/>
<rect x="118" y="225" width="1" height="1" fill="#00ffb0"/>
<rect x="119" y="225" width="1" height="1" fill="#00ffb0"/>
<rect x="120" y="225" width="1" height="1" fill="#20ff40"/>
<rect x="121" y="225" width="1" height="1" fill="#a0ff00"/>
<rect x="122" y="225" width="1" height="1" fill="#20ff40"/>
<rect x="123" y="225" width="1" height="1" fill="#20ff40"/>
<rect x="124" y="225" width="1" height="1" fill="#20ff40"/>
<rect x="120" y="226" width="1" height="1" fill="#ffff00"/>
<rect x="121" y="226" width="1" height="1" fill="#ffff00"/>
<rect x="122" y="226" width="1" height="1" fill="#ffff00"/>
<rect x="123" y="226" width="1" height="1" fill="#ffff00"/>
<rect x="124" y="226" width="1" height="1" fill="#20ff40"/>
<rect x="125" y="226" width="1" height="1" fill="#20ff40"/>
<rect x="126" y="226" width="1" height="1" fill="#20ff40"/>
<rect x="126" y="227" width="1" height="1" fill="#ff1060"/>
<rect x="127" y="227" width="1" height="1" fill="#ffff00"/>
<rect x="128" y="227" width="1" height="1" fill="#ffff00"/>
<rect x="129" y="227" width="1" height="1" fill="#ffff00"/>
<rect x="140" y="224" width="1" height="1" fill="#00ffb0"/>
<rect x="141" y="224" width="1" height="1" fill="#00ffff"/>
<rect x="142" y="224" width="1" height="1" fill="#00ffff"/>
<rect x="143" y="224" width="1" height="1" fill="#00ffb0"/>
<rect x="144" y="224" width="1" height="1" fill="#00ffff"/>
<rect x="145" y="224" width="1" height="1" fill="#00ffff"/>
<rect x="145" y="225" width="1" height="1" fill="#20ff40"/>
<rect x="146" y="225" width="1" height="1" fill="#20ff40"/>
<rect x="147" y="225" width="1" height="1" fill="#20ff40"/>
<rect x="148" y="225" width="1" height="1" fill="#ffff00"/>
<rect x="150" y="226" width="1" height="1" fill="#ff1060"/>
<rect x="151" y="226" width="1" height="1" fill="#ff1060"/>
<rect x="152" y="226" width="1" height="1" fill="#ff1060"/>
<rect x="153" y="226" width="1" height="1" fill="#ff1060"/>
<rect x="154" y="226" width="1" height="1" fill="#ff1060"/>
<rect x="155" y="226" width="1" height="1" fill="#ff1060"/>
<rect x="154" y="226" width="1" height="1" fill="#20ff40"/>
<rect x="155" y="227" width="1" height="1" fill="#ff1060"/>
<rect x="156" y="227" width="1" height="1" fill="#ff1060"/>
<rect x="157" y="227" width="1" height="1" fill="#ff1060"/>
<rect x="158" y="227" width="1" height="1" fill="#ff1060"/>
<rect x="159" y="227" width="1" height="1" fill="#ff1060"/>
<rect x="160" y="227" width="1" height="1" fill="#ff1060"/>
<rect x="161" y="227" width="1" height="1" fill="#ff1060"/>
<rect x="162" y="227" width="1" height="1" fill="#ff1060"/>
<rect x="162" y="227" width="1" height="1" fill="#20ff40"/>
<rect x="163" y="227" width="1" height="1" fill="#00ffff"/>
<rect x="164" y="228" width="1" height="1" fill="#ff1060"/>
<rect x="165" y="228" width="1" height="1" fill="#ff1060"/>
<rect x="166" y="228" width="1" height="1" fill="#ff1060"/>
<rect x="167" y="228" width="1" height="1" fill="#ff1060"/>
<rect x="168" y="228" width="1" height="1" fill="#ff1060"/>
<rect x="169" y="228" width="1" height="1" fill="#ff1060"/>
<rect x="170" y="228" width="1" height="1" fill="#ff1060"/>
<rect x="170" y="229" width="1" height="1" fill="#ff1060"/>
<rect x="171" y="229" width="1" height="1" fill="#ff1060"/>
<rect x="172" y="229" width="1" height="1" fill="#ff1060"/>
<rect x="173" y="229" width="1" height="1" fill="#ff1060"/>
<rect x="174" y="229" width="1" height="1" fill="#ff1060"/>
<rect x="175" y="229" width="1" height="1" fill="#ff1060"/>
<rect x="176" y="229" width="1" height="1" fill="#ff1060"/>
<rect x="176" y="230" width="1" height="1" fill="#ffff00"/>
<rect x="177" y="230" width="1" height="1" fill="#ffff00"/>
<rect x="177" y="231" width="1" height="1" fill="#ff1060"/>
<rect x="178" y="231" width="1" height="1" fill="#ff1060"/>
<rect x="179" y="231" width="1" height="1" fill="#ff1060"/>
<rect x="180" y="231" width="1" height="1" fill="#ff1060"/>
<rect x="180" y="231" width="1" height="1" fill="#20ff40"/>
<rect x="181" y="231" width="1" height="1" fill="#20ff40"/>
<rect x="182" y="231" width="1" height="1" fill="#20ff40"/>
<rect x="183" y="231" width="1" height="1" fill="#20ff40"/>
<rect x="184" y="231" width="1" height="1" fill="#20ff40"/>
<rect x="185" y="231" width="1" height="1" fill="#20ff40"/>
<rect x="186" y="231" width="1" height="1" fill="#20ff40"/>
<rect x="186" y="232" width="1" height="1" fill="#20ff40"/>
<rect x="187" y="233" width="1" height="1" fill="#ff1060"/>
<rect x="188" y="233" width="1" height="1" fill="#ff1060"/>
<rect x="189" y="233" width="1" height="1" fill="#ff1060"/>
<rect x="190" y="233" width="1" height="1" fill="#ff1060"/>
<rect x="191" y="233" width="1" height="1" fill="#ff1060"/>
<rect x="192" y="234" width="1" height="1" fill="#ff1060"/>
<rect x="193" y="234" width="1" height="1" fill="#ff1060"/>
<rect x="194" y="234" width="1" height="1" fill="#ff1060"/>
<rect x="195" y="234" width="1" height="1" fill="#20ff40"/>
<rect x="196" y="235" width="1" height="1" fill="#00ffb0"/>
<rect x="197" y="235" width="1" height="1" fill="#00ffff"/>
<rect x="198" y="235" width="1" height="1" fill="#00ffb0"/>
<rect x="199" y="235" width="1" height="1" fill="#20ff40"/>
<rect x="200" y="235" width="1" height="1" fill="#00ffb0"/>
<rect x="201" y="235" width="1" height="1" fill="#00ffb0"/>
<rect x="202" y="235" width="1" height="1" fill="#00ffff"/>
<rect x="203" y="235" width="1" height="1" fill="#20ff40"/>
<rect x="204" y="235" width="1" height="1" fill="#20ff40"/>
<rect x="205" y="235" width="1" height="1" fill="#00ffb0"/>
<rect x="206" y="235" width="1" height="1" fill="#20ff40"/>
<rect x="207" y="236" width="1" height="1" fill="#00ffff"/>
<rect x="208" y="236" width="1" height="1" fill="#00ffb0"/>
<rect x="209" y="236" width="1" height="1" fill="#00ffff"/>
<rect x="210" y="236" width="1" height="1" fill="#00ffff"/>
<rect x="211" y="236" width="1" height="1" fill="#00ffff"/>
<rect x="209" y="237" width="1" height="1" fill="#00ffff"/>
<rect x="210" y="237" width="1" height="1" fill="#00ffff"/>
<rect x="211" y="237" width="1" height="1" fill="#00ffff"/>
<rect x="225" y="242" width="1" height="1" fill="#00ffff"/>
<rect x="226" y="242" width="1" height="1" fill="#00d0ff"/>
<rect x="227" y="242" width="1" height="1" fill="#00d0ff"/>
<rect x="228" y="242" width="1" height="1" fill="#00ffff"/>
<rect x="231" y="243" width="1" height="1" fill="#00ffff"/>
<rect x="138" y="230" width="1" height="1" fill="#20ff40"/>
<rect x="139" y="230" width="1" height="1" fill="#20ff40"/>
<rect x="140" y="230" width="1" height="1" fill="#20ff40"/>
<rect x="141" y="230" width="1" height="1" fill="#20ff40"/>
<rect x="142" y="231" width="1" height="1" fill="#ff1060"/>
<rect x="143" y="231" width="1" height="1" fill="#ff1060"/>
<rect x="144" y="231" width="1" height="1" fill="#ff1060"/>
<rect x="145" y="231" width="1" height="1" fill="#ff1060"/>
<rect x="145" y="232" width="1" height="1" fill="#ff1060"/>
<rect x="146" y="232" width="1" height="1" fill="#ff1060"/>
<rect x="147" y="232" width="1" height="1" fill="#ff1060"/>
<rect x="148" y="232" width="1" height="1" fill="#ff1060"/>
<rect x="147" y="233" width="1" height="1" fill="#20ff40"/>
<rect x="148" y="233" width="1" height="1" fill="#ffff00"/>
<rect x="149" y="233" width="1" height="1" fill="#20ff40"/>
<rect x="150" y="233" width="1" height="1" fill="#20ff40"/>
<rect x="150" y="234" width="1" height="1" fill="#00ffff"/>
<rect x="151" y="234" width="1" height="1" fill="#00ffff"/>
<rect x="152" y="234" width="1" height="1" fill="#00ffff"/>
<rect x="153" y="234" width="1" height="1" fill="#00ffff"/>
<rect x="158" y="237" width="1" height="1" fill="#20ff40"/>
<rect x="159" y="237" width="1" height="1" fill="#20ff40"/>
<rect x="160" y="237" width="1" height="1" fill="#00ffb0"/>
<rect x="161" y="237" width="1" height="1" fill="#20ff40"/>
<rect x="162" y="237" width="1" height="1" fill="#00ffb0"/>
<rect x="163" y="239" width="1" height="1" fill="#00ffff"/>
<rect x="164" y="239" width="1" height="1" fill="#00ffff"/>
<rect x="165" y="239" width="1" height="1" fill="#00ffff"/>
<rect x="166" y="239" width="1" height="1" fill="#00ffff"/>
<rect x="129" y="223" width="1" height="1" fill="#0090ff"/>
<rect x="131" y="223" width="1" height="1" fill="#0090ff"/>
<rect x="133" y="223" width="1" height="1" fill="#0090ff"/>
<rect x="135" y="223" width="1" height="1" fill="#0090ff"/>
<rect x="137" y="223" width="1" height="1" fill="#0090ff"/>
<rect x="139" y="223" width="1" height="1" fill="#0090ff"/>
<rect x="141" y="223" width="1" height="1" fill="#0090ff"/>
<rect x="143" y="223" width="1" height="1" fill="#0090ff"/>
<rect x="145" y="223" width="1" height="1" fill="#0090ff"/>
<rect x="89" y="223" width="1" height="1" fill="#0070ff"/>
<rect x="92" y="223" width="1" height="1" fill="#0070ff"/>
<rect x="95" y="223" width="1" height="1" fill="#0070ff"/>
<rect x="98" y="223" width="1" height="1" fill="#0070ff"/>
<rect x="101" y="223" width="1" height="1" fill="#0070ff"/>
<rect x="518" y="224" width="1" height="1" fill="#20ff40"/>
<rect x="520" y="225" width="1" height="1" fill="#00ffff"/>
<rect x="521" y="225" width="1" height="1" fill="#00ffff"/>
<rect x="522" y="225" width="1" height="1" fill="#00ffff"/>
<rect x="524" y="226" width="1" height="1" fill="#00ffff"/>
<rect x="525" y="226" width="1" height="1" fill="#00ffff"/>
<rect x="526" y="226" width="1" height="1" fill="#00ffff"/>
<rect x="527" y="226" width="1" height="1" fill="#20ff40"/>
<rect x="527" y="227" width="1" height="1" fill="#ff1060"/>
<rect x="528" y="227" width="1" height="1" fill="#ff1060"/>
<rect x="529" y="227" width="1" height="1" fill="#ff1060"/>
<rect x="530" y="227" width="1" height="1" fill="#20ff40"/>
<rect x="530" y="228" width="1" height="1" fill="#ff1060"/>
<rect x="531" y="228" width="1" height="1" fill="#ff1060"/>
<rect x="532" y="228" width="1" height="1" fill="#ff1060"/>
<rect x="532" y="228" width="1" height="1" fill="#ffff00"/>
<rect x="533" y="228" width="1" height="1" fill="#ffff00"/>
<rect x="534" y="228" width="1" height="1" fill="#ffff00"/>
<rect x="533" y="229" width="1" height="1" fill="#ffff00"/>
<rect x="538" y="230" width="1" height="1" fill="#20ff40"/>
<rect x="539" y="230" width="1" height="1" fill="#00ffff"/>
<rect x="540" y="230" width="1" height="1" fill="#00ffff"/>
<rect x="541" y="231" width="1" height="1" fill="#00ffff"/>
<rect x="544" y="232" width="1" height="1" fill="#00ffff"/>
<rect x="545" y="232" width="1" height="1" fill="#00ffff"/>
<rect x="546" y="232" width="1" height="1" fill="#00ffff"/>
<rect x="547" y="232" width="1" height="1" fill="#00ffff"/>
<rect x="546" y="233" width="1" height="1" fill="#ffff00"/>
<rect x="547" y="233" width="1" height="1" fill="#ffff00"/>
<rect x="548" y="233" width="1" height="1" fill="#ffff00"/>
<rect x="549" y="233" width="1" height="1" fill="#ffff00"/>
<rect x="548" y="234" width="1" height="1" fill="#20ff40"/>
<rect x="549" y="234" width="1" height="1" fill="#20ff40"/>
<rect x="550" y="234" width="1" height="1" fill="#20ff40"/>
<rect x="551" y="234" width="1" height="1" fill="#20ff40"/>
<rect x="550" y="234" width="1" height="1" fill="#00ffff"/>
<rect x="558" y="237" width="1" height="1" fill="#20ff40"/>
<rect x="559" y="237" width="1" height="1" fill="#20ff40"/>
<rect x="560" y="237" width="1" height="1" fill="#ffff00"/>
<rect x="561" y="237" width="1" height="1" fill="#20ff40"/>
<rect x="562" y="237" width="1" height="1" fill="#00ffff"/>
<rect x="563" y="237" width="1" height="1" fill="#00ffff"/>
<rect x="570" y="240" width="1" height="1" fill="#00ffff"/>
<rect x="571" y="240" width="1" height="1" fill="#00ffff"/>
<rect x="572" y="240" width="1" height="1" fill="#00ffff"/>
<rect x="572" y="243" width="1" height="1" fill="#0060ff"/>
<rect x="574" y="243" width="1" height="1" fill="#0060ff"/>
<rect x="576" y="241" width="1" height="1" fill="#0060ff"/>
<rect x="578" y="241" width="1" height="1" fill="#0060ff"/>
<rect x="580" y="242" width="1" height="1" fill="#0060ff"/>
<rect x="582" y="242" width="1" height="1" fill="#0060ff"/>
<rect x="584" y="243" width="1" height="1" fill="#0060ff"/>
<rect x="20" y="228" width="1" height="1" fill="#00e0e0"/>
<rect x="21" y="228" width="1" height="1" fill="#00a0ff"/>
<rect x="22" y="228" width="1" height="1" fill="#0060ff"/>
<rect x="23" y="228" width="1" height="1" fill="#0050ff"/>
<rect x="24" y="228" width="1" height="1" fill="#0080ff"/>
<rect x="25" y="228" width="1" height="1" fill="#0070ff"/>
<rect x="25" y="225" width="1" height="1" fill="#0040e0"/>
<rect x="26" y="227" width="1" height="1" fill="#0040e0"/>
<rect x="25" y="229" width="1" height="1" fill="#0040e0"/>
<rect x="26" y="231" width="1" height="1" fill="#0040e0"/>
<rect x="24" y="230" width="1" height="1" fill="#0040e0"/>
<rect x="311" y="284" width="1" height="1" fill="#0090ff"/>
<rect x="348" y="283" width="1" height="1" fill="#00a8e8"/>
<rect x="365" y="294" width="1" height="1" fill="#00b0ff"/>
<rect x="332" y="320" width="1" height="1" fill="#00b0ff"/>
<rect x="308" y="340" width="1" height="1" fill="#00b0ff"/>
<rect x="554" y="142" width="1" height="1" fill="#00a8e8"/>
<rect x="378" y="108" width="1" height="1" fill="#0090ff"/>
<rect x="348" y="164" width="1" height="1" fill="#00a8e8"/>
<rect x="351" y="168" width="1" height="1" fill="#00a8e8"/>
<rect x="393" y="179" width="1" height="1" fill="#00b0ff"/>
<rect x="378" y="194" width="1" height="1" fill="#0090ff"/>
<rect x="119" y="291" width="1" height="1" fill="#00a8e8"/>
<rect x="101" y="363" width="1" height="1" fill="#00b0ff"/>
<rect x="470" y="269" width="1" height="1" fill="#00a8e8"/>
<rect x="490" y="313" width="1" height="1" fill="#00b0ff"/>
<rect x="475" y="348" width="1" height="1" fill="#00b0ff"/>
<rect x="590" y="348" width="1" height="1" fill="#00a8e8"/>
<rect x="131" y="134" width="1" height="1" fill="#0090ff"/>
<rect x="112" y="155" width="1" height="1" fill="#00b0ff"/>
<rect x="122" y="175" width="1" height="1" fill="#00a8e8"/>
<rect x="139" y="191" width="1" height="1" fill="#00b0ff"/>
<rect x="124" y="208" width="1" height="1" fill="#00b0ff"/>
<rect x="184" y="204" width="1" height="1" fill="#0090ff"/>
<rect x="215" y="147" width="1" height="1" fill="#0090ff"/>
<rect x="280" y="128" width="1" height="1" fill="#00a8e8"/>
<rect x="176" y="110" width="1" height="1" fill="#00b0ff"/>
<rect x="242" y="101" width="1" height="1" fill="#00a8e8"/>
<rect x="291" y="109" width="1" height="1" fill="#00a8e8"/>
<rect x="215" y="184" width="1" height="1" fill="#00a8e8"/>
<rect x="81" y="99" width="1" height="1" fill="#00b0ff"/>
<rect x="134" y="164" width="1" height="1" fill="#00a8e8"/>
<rect x="179" y="122" width="1" height="1" fill="#00b0ff"/>
<rect x="20" y="370" width="600" height="1" fill="#a0a0a0"/>
<rect x="20" y="380" width="600" height="1" fill="#a0a0a0"/>
<rect x="20" y="390" width="600" height="1" fill="#a0a0a0"/>
<rect x="19" y="196" width="1" height="70" fill="#a0a0a0"/>
<rect x="20" y="391" width="1" height="9" fill="#00ffff"/>
<rect x="21" y="391" width="1" height="9" fill="#00ffff"/>
<rect x="22" y="393" width="1" height="7" fill="#00ffff"/>
<rect x="23" y="393" width="1" height="7" fill="#00ffff"/>
<rect x="24" y="397" width="1" height="3" fill="#00ffff"/>
<rect x="25" y="396" width="1" height="4" fill="#00ffff"/>
<rect x="26" y="392" width="1" height="8" fill="#00ffff"/>
<rect x="27" y="396" width="1" height="4" fill="#00ffff"/>
<rect x="28" y="395" width="1" height="5" fill="#00ffff"/>
<rect x="29" y="393" width="1" height="7" fill="#00ffff"/>
<rect x="30" y="396" width="1" height="4" fill="#00ffff"/>
<rect x="31" y="396" width="1" height="4" fill="#00ffff"/>
<rect x="32" y="396" width="1" height="4" fill="#00ffff"/>
<rect x="33" y="392" width="1" height="8" fill="#00ffff"/>
<rect x="34" y="396" width="1" height="4" fill="#00ffff"/>
<rect x="35" y="393" width="1" height="7" fill="#00ffff"/>
<rect x="36" y="394" width="1" height="6" fill="#00ffff"/>
<rect x="37" y="397" width="1" height="3" fill="#00ffff"/>
<rect x="38" y="396" width="1" height="4" fill="#00ffff"/>
<rect x="39" y="392" width="1" height="8" fill="#00ffff"/>
<rect x="40" y="392" width="1" height="8" fill="#00ffff"/>
<rect x="41" y="396" width="1" height="4" fill="#00ffff"/>
<rect x="42" y="396" width="1" height="4" fill="#00ffff"/>
<rect x="43" y="391" width="1" height="9" fill="#00ffff"/>
<rect x="44" y="396" width="1" height="4" fill="#00ffff"/>
<rect x="45" y="394" width="1" height="6" fill="#00ffff"/>
<rect x="46" y="396" width="1" height="4" fill="#00ffff"/>
<rect x="47" y="396" width="1" height="4" fill="#00ffff"/>
<rect x="48" y="395" width="1" height="5" fill="#00ffff"/>
<rect x="49" y="396" width="1" height="4" fill="#00ffff"/>
<rect x="50" y="396" width="1" height="4" fill="#00ffff"/>
<rect x="51" y="397" width="1" height="3" fill="#00ffff"/>
<rect x="52" y="396" width="1" height="4" fill="#00ffff"/>
<rect x="53" y="397" width="1" height="3" fill="#00ffff"/>
<rect x="54" y="395" width="1" height="5" fill="#00ffff"/>
<rect x="55" y="397" width="1" height="3" fill="#00ffff"/>
<rect x="56" y="393" width="1" height="7" fill="#00ffff"/>
<rect x="57" y="398" width="1" height="2" fill="#00ffff"/>
<rect x="58" y="397" width="1" height="3" fill="#00ffff"/>
<rect x="59" y="396" width="1" height="4" fill="#00ffff"/>
<rect x="60" y="396" width="1" height="4" fill="#00ffff"/>
<rect x="61" y="396" width="1" height="4" fill="#00ffff"/>
<rect x="62" y="396" width="1" height="4" fill="#00ffff"/>
<rect x="63" y="396" width="1" height="4" fill="#00ffff"/>
<rect x="64" y="396" width="1" height="4" fill="#00ffff"/>
<rect x="65" y="393" width="1" height="7" fill="#00ffff"/>
<rect x="66" y="396" width="1" height="4" fill="#00ffff"/>
<rect x="67" y="396" width="1" height="4" fill="#00ffff"/>
<rect x="68" y="396" width="1" height="4" fill="#00ffff"/>
<rect x="69" y="393" width="1" height="7" fill="#00ffff"/>
<rect x="70" y="397" width="1" height="3" fill="#00ffff"/>
<rect x="71" y="396" width="1" height="4" fill="#00ffff"/>
<rect x="72" y="396" width="1" height="4" fill="#00ffff"/>
<rect x="73" y="395" width="1" height="5" fill="#00ffff"/>
<rect x="74" y="395" width="1" height="5" fill="#00ffff"/>
<rect x="75" y="396" width="1" height="4" fill="#00ffff"/>
<rect x="76" y="396" width="1" height="4" fill="#00ffff"/>
<rect x="77" y="392" width="1" height="8" fill="#00ffff"/>
<rect x="78" y="396" width="1" height="4" fill="#00ffff"/>
<rect x="79" y="392" width="1" height="8" fill="#00ffff"/>
<rect x="80" y="393" width="1" height="7" fill="#00ffff"/>
<rect x="81" y="393" width="1" height="7" fill="#00ffff"/>
<rect x="82" y="390" width="1" height="10" fill="#00ffff"/>
<rect x="83" y="391" width="1" height="9" fill="#00ffff"/>
<rect x="84" y="392" width="1" height="8" fill="#00ffff"/>
<rect x="85" y="391" width="1" height="9" fill="#00ffff"/>
<rect x="86" y="390" width="1" height="10" fill="#ffff00"/>
<rect x="87" y="391" width="1" height="9" fill="#00ffff"/>
<rect x="88" y="395" width="1" height="5" fill="#00ffff"/>
<rect x="89" y="391" width="1" height="9" fill="#00ffff"/>
<rect x="90" y="392" width="1" height="8" fill="#00ffff"/>
<rect x="91" y="393" width="1" height="7" fill="#00ffff"/>
<rect x="92" y="395" width="1" height="5" fill="#00ffff"/>
<rect x="93" y="394" width="1" height="6" fill="#00ffff"/>
<rect x="94" y="390" width="1" height="10" fill="#ffff00"/>
<rect x="95" y="391" width="1" height="9" fill="#00ffff"/>
<rect x="96" y="391" width="1" height="9" fill="#00ffff"/>
<rect x="97" y="394" width="1" height="6" fill="#00ffff"/>
<rect x="98" y="392" width="1" height="8" fill="#00ffff"/>
<rect x="99" y="393" width="1" height="7" fill="#00ffff"/>
<rect x="100" y="394" width="1" height="6" fill="#00ffff"/>
<rect x="101" y="394" width="1" height="6" fill="#00ffff"/>
<rect x="102" y="394" width="1" height="6" fill="#00ffff"/>
<rect x="103" y="394" width="1" height="6" fill="#00ffff"/>
<rect x="104" y="393" width="1" height="7" fill="#00ffff"/>
<rect x="105" y="395" width="1" height="5" fill="#00ffff"/>
<rect x="106" y="392" width="1" height="8" fill="#00ffff"/>
<rect x="107" y="391" width="1" height="9" fill="#00ffff"/>
<rect x="108" y="393" width="1" height="7" fill="#00ffff"/>
<rect x="109" y="394" width="1" height="6" fill="#00ffff"/>
<rect x="110" y="394" width="1" height="6" fill="#00ffff"/>
<rect x="111" y="393" width="1" height="7" fill="#00ffff"/>
<rect x="112" y="390" width="1" height="10" fill="#ffff00"/>
<rect x="113" y="394" width="1" height="6" fill="#00ffff"/>
<rect x="114" y="390" width="1" height="10" fill="#ffff00"/>
<rect x="115" y="390" width="1" height="10" fill="#00ffff"/>
<rect x="116" y="392" width="1" height="8" fill="#00ffff"/>
<rect x="117" y="396" width="1" height="4" fill="#00ffff"/>
<rect x="118" y="393" width="1" height="7" fill="#00ffff"/>
<rect x="119" y="388" width="1" height="12" fill="#ffff00"/>
<rect x="120" y="388" width="1" height="12" fill="#ffff00"/>
<rect x="121" y="388" width="1" height="12" fill="#ffff00"/>
<rect x="122" y="392" width="1" height="8" fill="#00ffff"/>
<rect x="123" y="387" width="1" height="13" fill="#ffff00"/>
<rect x="124" y="386" width="1" height="14" fill="#ffff00"/>
<rect x="125" y="385" width="1" height="15" fill="#ffff00"/>
<rect x="126" y="386" width="1" height="14" fill="#ffff00"/>
<rect x="127" y="385" width="1" height="15" fill="#ffff00"/>
<rect x="128" y="386" width="1" height="14" fill="#ffff00"/>
<rect x="129" y="384" width="1" height="16" fill="#ffff00"/>
<rect x="130" y="386" width="1" height="14" fill="#ffff00"/>
<rect x="131" y="390" width="1" height="10" fill="#00ffff"/>
<rect x="132" y="388" width="1" height="12" fill="#ffff00"/>
<rect x="133" y="388" width="1" height="12" fill="#ffff00"/>
<rect x="134" y="388" width="1" height="12" fill="#ffff00"/>
<rect x="135" y="391" width="1" height="9" fill="#00ffff"/>
<rect x="136" y="391" width="1" height="9" fill="#00ffff"/>
<rect x="137" y="388" width="1" height="12" fill="#ffff00"/>
<rect x="138" y="391" width="1" height="9" fill="#00ffff"/>
<rect x="139" y="390" width="1" height="10" fill="#ffff00"/>
<rect x="140" y="389" width="1" height="11" fill="#ffff00"/>
<rect x="141" y="389" width="1" height="11" fill="#ffff00"/>
<rect x="142" y="388" width="1" height="12" fill="#ffff00"/>
<rect x="143" y="384" width="1" height="16" fill="#ffff00"/>
<rect x="144" y="385" width="1" height="15" fill="#ffff00"/>
<rect x="145" y="384" width="1" height="16" fill="#ffff00"/>
<rect x="146" y="386" width="1" height="14" fill="#ffff00"/>
<rect x="147" y="385" width="1" height="15" fill="#ffff00"/>
<rect x="148" y="387" width="1" height="13" fill="#ffff00"/>
<rect x="149" y="388" width="1" height="12" fill="#ffff00"/>
<rect x="150" y="390" width="1" height="10" fill="#ffff00"/>
<rect x="151" y="387" width="1" height="13" fill="#ffff00"/>
<rect x="152" y="386" width="1" height="14" fill="#ffff00"/>
<rect x="153" y="388" width="1" height="12" fill="#ffff00"/>
<rect x="154" y="388" width="1" height="12" fill="#ffff00"/>
<rect x="155" y="385" width="1" height="15" fill="#ffff00"/>
<rect x="156" y="385" width="1" height="15" fill="#ffff00"/>
<rect x="157" y="384" width="1" height="16" fill="#ffff00"/>
<rect x="158" y="384" width="1" height="16" fill="#ffff00"/>
<rect x="159" y="384" width="1" height="16" fill="#ffff00"/>
<rect x="160" y="385" width="1" height="15" fill="#ffff00"/>
<rect x="161" y="383" width="1" height="17" fill="#ffff00"/>
<rect x="162" y="383" width="1" height="17" fill="#ffff00"/>
<rect x="163" y="381" width="1" height="19" fill="#ffff00"/>
<rect x="164" y="383" width="1" height="17" fill="#ffff00"/>
<rect x="165" y="385" width="1" height="15" fill="#ffff00"/>
<rect x="166" y="382" width="1" height="18" fill="#ffff00"/>
<rect x="167" y="382" width="1" height="18" fill="#ffff00"/>
<rect x="168" y="383" width="1" height="17" fill="#ffff00"/>
<rect x="169" y="382" width="1" height="18" fill="#ffff00"/>
<rect x="170" y="385" width="1" height="15" fill="#ffff00"/>
<rect x="171" y="384" width="1" height="16" fill="#ffff00"/>
<rect x="172" y="383" width="1" height="17" fill="#ffff00"/>
<rect x="173" y="383" width="1" height="17" fill="#ffff00"/>
<rect x="174" y="384" width="1" height="16" fill="#ffff00"/>
<rect x="175" y="382" width="1" height="18" fill="#ffff00"/>
<rect x="176" y="385" width="1" height="15" fill="#ffff00"/>
<rect x="177" y="384" width="1" height="16" fill="#ffff00"/>
<rect x="178" y="385" width="1" height="15" fill="#ffff00"/>
<rect x="179" y="386" width="1" height="14" fill="#ffff00"/>
<rect x="180" y="387" width="1" height="13" fill="#ffff00"/>
<rect x="181" y="388" width="1" height="12" fill="#ffff00"/>
<rect x="182" y="390" width="1" height="10" fill="#ffff00"/>
<rect x="183" y="390" width="1" height="10" fill="#00ffff"/>
<rect x="184" y="390" width="1" height="10" fill="#00ffff"/>
<rect x="185" y="390" width="1" height="10" fill="#ffff00"/>
<rect x="186" y="388" width="1" height="12" fill="#ffff00"/>
<rect x="187" y="386" width="1" height="14" fill="#ffff00"/>
<rect x="188" y="385" width="1" height="15" fill="#ffff00"/>
<rect x="189" y="386" width="1" height="14" fill="#ffff00"/>
<rect x="190" y="386" width="1" height="14" fill="#ffff00"/>
<rect x="191" y="384" width="1" height="16" fill="#ffff00"/>
<rect x="192" y="385" width="1" height="15" fill="#ffff00"/>
<rect x="193" y="386" width="1" height="14" fill="#ffff00"/>
<rect x="194" y="387" width="1" height="13" fill="#ffff00"/>
<rect x="195" y="389" width="1" height="11" fill="#ffff00"/>
<rect x="196" y="389" width="1" height="11" fill="#ffff00"/>
<rect x="197" y="389" width="1" height="11" fill="#ffff00"/>
<rect x="198" y="392" width="1" height="8" fill="#00ffff"/>
<rect x="199" y="393" width="1" height="7" fill="#00ffff"/>
<rect x="200" y="390" width="1" height="10" fill="#ffff00"/>
<rect x="201" y="392" width="1" height="8" fill="#00ffff"/>
<rect x="202" y="392" width="1" height="8" fill="#00ffff"/>
<rect x="203" y="392" width="1" height="8" fill="#00ffff"/>
<rect x="204" y="390" width="1" height="10" fill="#ffff00"/>
<rect x="205" y="390" width="1" height="10" fill="#00ffff"/>
<rect x="206" y="392" width="1" height="8" fill="#00ffff"/>
<rect x="207" y="390" width="1" height="10" fill="#ffff00"/>
<rect x="208" y="392" width="1" height="8" fill="#00ffff"/>
<rect x="209" y="390" width="1" height="10" fill="#ffff00"/>
<rect x="210" y="390" width="1" height="10" fill="#00ffff"/>
<rect x="211" y="390" width="1" height="10" fill="#00ffff"/>
<rect x="212" y="392" width="1" height="8" fill="#00ffff"/>
<rect x="213" y="392" width="1" height="8" fill="#00ffff"/>
<rect x="214" y="390" width="1" height="10" fill="#00ffff"/>
<rect x="215" y="394" width="1" height="6" fill="#00ffff"/>
<rect x="216" y="392" width="1" height="8" fill="#00ffff"/>
<rect x="217" y="391" width="1" height="9" fill="#00ffff"/>
<rect x="218" y="395" width="1" height="5" fill="#00ffff"/>
<rect x="219" y="393" width="1" height="7" fill="#00ffff"/>
<rect x="220" y="395" width="1" height="5" fill="#00ffff"/>
<rect x="221" y="395" width="1" height="5" fill="#00ffff"/>
<rect x="222" y="394" width="1" height="6" fill="#00ffff"/>
<rect x="223" y="395" width="1" height="5" fill="#00ffff"/>
<rect x="224" y="395" width="1" height="5" fill="#00ffff"/>
<rect x="225" y="396" width="1" height="4" fill="#00ffff"/>
<rect x="226" y="395" width="1" height="5" fill="#00ffff"/>
<rect x="227" y="394" width="1" height="6" fill="#00ffff"/>
<rect x="228" y="390" width="1" height="10" fill="#00ffff"/>
<rect x="229" y="392" width="1" height="8" fill="#00ffff"/>
<rect x="230" y="396" width="1" height="4" fill="#00ffff"/>
<rect x="231" y="393" width="1" height="7" fill="#00ffff"/>
<rect x="232" y="395" width="1" height="5" fill="#00ffff"/>
<rect x="233" y="390" width="1" height="10" fill="#ffff00"/>
<rect x="234" y="395" width="1" height="5" fill="#00ffff"/>
<rect x="235" y="393" width="1" height="7" fill="#00ffff"/>
<rect x="236" y="395" width="1" height="5" fill="#00ffff"/>
<rect x="237" y="395" width="1" height="5" fill="#00ffff"/>
<rect x="238" y="393" width="1" height="7" fill="#00ffff"/>
<rect x="239" y="392" width="1" height="8" fill="#00ffff"/>
<rect x="240" y="394" width="1" height="6" fill="#00ffff"/>
<rect x="241" y="396" width="1" height="4" fill="#00ffff"/>
<rect x="242" y="390" width="1" height="10" fill="#ffff00"/>
<rect x="243" y="396" width="1" height="4" fill="#00ffff"/>
<rect x="244" y="392" width="1" height="8" fill="#00ffff"/>
<rect x="245" y="396" width="1" height="4" fill="#00ffff"/>
<rect x="246" y="394" width="1" height="6" fill="#00ffff"/>
<rect x="247" y="394" width="1" height="6" fill="#00ffff"/>
<rect x="248" y="394" width="1" height="6" fill="#00ffff"/>
<rect x="249" y="392" width="1" height="8" fill="#00ffff"/>
<rect x="250" y="392" width="1" height="8" fill="#00ffff"/>
<rect x="251" y="392" width="1" height="8" fill="#00ffff"/>
<rect x="252" y="392" width="1" height="8" fill="#00ffff"/>
<rect x="253" y="392" width="1" height="8" fill="#00ffff"/>
<rect x="254" y="390" width="1" height="10" fill="#ffff00"/>
<rect x="255" y="394" width="1" height="6" fill="#00ffff"/>
<rect x="256" y="394" width="1" height="6" fill="#00ffff"/>
<rect x="257" y="390" width="1" height="10" fill="#ffff00"/>
<rect x="258" y="392" width="1" height="8" fill="#00ffff"/>
<rect x="259" y="390" width="1" height="10" fill="#ffff00"/>
<rect x="260" y="392" width="1" height="8" fill="#00ffff"/>
<rect x="261" y="394" width="1" height="6" fill="#00ffff"/>
<rect x="262" y="392" width="1" height="8" fill="#00ffff"/>
<rect x="263" y="394" width="1" height="6" fill="#00ffff"/>
<rect x="264" y="394" width="1" height="6" fill="#00ffff"/>
<rect x="265" y="394" width="1" height="6" fill="#00ffff"/>
<rect x="266" y="394" width="1" height="6" fill="#00ffff"/>
<rect x="267" y="394" width="1" height="6" fill="#00ffff"/>
<rect x="268" y="392" width="1" height="8" fill="#00ffff"/>
<rect x="269" y="392" width="1" height="8" fill="#00ffff"/>
<rect x="270" y="394" width="1" height="6" fill="#00ffff"/>
<rect x="271" y="394" width="1" height="6" fill="#00ffff"/>
<rect x="272" y="394" width="1" height="6" fill="#00ffff"/>
<rect x="273" y="392" width="1" height="8" fill="#00ffff"/>
<rect x="274" y="394" width="1" height="6" fill="#00ffff"/>
<rect x="275" y="394" width="1" height="6" fill="#00ffff"/>
<rect x="276" y="392" width="1" height="8" fill="#00ffff"/>
<rect x="277" y="394" width="1" height="6" fill="#00ffff"/>
<rect x="278" y="390" width="1" height="10" fill="#ffff00"/>
<rect x="279" y="396" width="1" height="4" fill="#00ffff"/>
<rect x="280" y="394" width="1" height="6" fill="#00ffff"/>
<rect x="281" y="392" width="1" height="8" fill="#00ffff"/>
<rect x="282" y="394" width="1" height="6" fill="#00ffff"/>
<rect x="283" y="390" width="1" height="10" fill="#ffff00"/>
<rect x="284" y="394" width="1" height="6" fill="#00ffff"/>
<rect x="285" y="392" width="1" height="8" fill="#00ffff"/>
<rect x="286" y="394" width="1" height="6" fill="#00ffff"/>
<rect x="287" y="398" width="1" height="2" fill="#00ffff"/>
<rect x="288" y="394" width="1" height="6" fill="#00ffff"/>
<rect x="289" y="396" width="1" height="4" fill="#00ffff"/>
<rect x="290" y="394" width="1" height="6" fill="#00ffff"/>
<rect x="291" y="392" width="1" height="8" fill="#00ffff"/>
<rect x="292" y="392" width="1" height="8" fill="#00ffff"/>
<rect x="293" y="394" width="1" height="6" fill="#00ffff"/>
<rect x="294" y="392" width="1" height="8" fill="#00ffff"/>
<rect x="295" y="392" width="1" height="8" fill="#00ffff"/>
<rect x="296" y="394" width="1" height="6" fill="#00ffff"/>
<rect x="297" y="390" width="1" height="10" fill="#ffff00"/>
<rect x="298" y="394" width="1" height="6" fill="#00ffff"/>
<rect x="299" y="394" width="1" height="6" fill="#00ffff"/>
<rect x="300" y="396" width="1" height="4" fill="#00ffff"/>
<rect x="301" y="394" width="1" height="6" fill="#00ffff"/>
<rect x="302" y="394" width="1" height="6" fill="#00ffff"/>
<rect x="303" y="390" width="1" height="10" fill="#ffff00"/>
<rect x="304" y="394" width="1" height="6" fill="#00ffff"/>
<rect x="305" y="390" width="1" height="10" fill="#ffff00"/>
<rect x="306" y="390" width="1" height="10" fill="#ffff00"/>
<rect x="307" y="394" width="1" height="6" fill="#00ffff"/>
<rect x="308" y="396" width="1" height="4" fill="#00ffff"/>
<rect x="309" y="390" width="1" height="10" fill="#ffff00"/>
<rect x="310" y="394" width="1" height="6" fill="#00ffff"/>
<rect x="311" y="394" width="1" height="6" fill="#00ffff"/>
<rect x="312" y="388" width="1" height="12" fill="#ffff00"/>
<rect x="313" y="394" width="1" height="6" fill="#00ffff"/>
<rect x="314" y="392" width="1" height="8" fill="#00ffff"/>
<rect x="315" y="394" width="1" height="6" fill="#00ffff"/>
<rect x="316" y="394" width="1" height="6" fill="#00ffff"/>
<rect x="317" y="394" width="1" height="6" fill="#00ffff"/>
<rect x="318" y="394" width="1" height="6" fill="#00ffff"/>
<rect x="319" y="396" width="1" height="4" fill="#00ffff"/>
<rect x="320" y="393" width="1" height="7" fill="#00ffff"/>
<rect x="321" y="392" width="1" height="8" fill="#00ffff"/>
<rect x="322" y="394" width="1" height="6" fill="#00ffff"/>
<rect x="323" y="390" width="1" height="10" fill="#00ffff"/>
<rect x="324" y="392" width="1" height="8" fill="#00ffff"/>
<rect x="325" y="393" width="1" height="7" fill="#00ffff"/>
<rect x="326" y="393" width="1" height="7" fill="#00ffff"/>
<rect x="327" y="391" width="1" height="9" fill="#00ffff"/>
<rect x="328" y="392" width="1" height="8" fill="#00ffff"/>
<rect x="329" y="392" width="1" height="8" fill="#00ffff"/>
<rect x="330" y="392" width="1" height="8" fill="#00ffff"/>
<rect x="331" y="394" width="1" height="6" fill="#00ffff"/>
<rect x="332" y="392" width="1" height="8" fill="#00ffff"/>
<rect x="333" y="392" width="1" height="8" fill="#00ffff"/>
<rect x="334" y="390" width="1" height="10" fill="#00ffff"/>
<rect x="335" y="392" width="1" height="8" fill="#00ffff"/>
<rect x="336" y="390" width="1" height="10" fill="#00ffff"/>
<rect x="337" y="393" width="1" height="7" fill="#00ffff"/>
<rect x="338" y="391" width="1" height="9" fill="#00ffff"/>
<rect x="339" y="392" width="1" height="8" fill="#00ffff"/>
<rect x="340" y="392" width="1" height="8" fill="#00ffff"/>
<rect x="341" y="391" width="1" height="9" fill="#00ffff"/>
<rect x="342" y="394" width="1" height="6" fill="#00ffff"/>
<rect x="343" y="393" width="1" height="7" fill="#00ffff"/>
<rect x="344" y="391" width="1" height="9" fill="#00ffff"/>
<rect x="345" y="394" width="1" height="6" fill="#00ffff"/>
<rect x="346" y="391" width="1" height="9" fill="#00ffff"/>
<rect x="347" y="391" width="1" height="9" fill="#00ffff"/>
<rect x="348" y="393" width="1" height="7" fill="#00ffff"/>
<rect x="349" y="389" width="1" height="11" fill="#ffff00"/>
<rect x="350" y="389" width="1" height="11" fill="#ffff00"/>
<rect x="351" y="393" width="1" height="7" fill="#00ffff"/>
<rect x="352" y="390" width="1" height="10" fill="#00ffff"/>
<rect x="353" y="394" width="1" height="6" fill="#00ffff"/>
<rect x="354" y="392" width="1" height="8" fill="#00ffff"/>
<rect x="355" y="392" width="1" height="8" fill="#00ffff"/>
<rect x="356" y="391" width="1" height="9" fill="#00ffff"/>
<rect x="357" y="394" width="1" height="6" fill="#00ffff"/>
<rect x="358" y="392" width="1" height="8" fill="#00ffff"/>
<rect x="359" y="392" width="1" height="8" fill="#00ffff"/>
<rect x="360" y="393" width="1" height="7" fill="#00ffff"/>
<rect x="361" y="394" width="1" height="6" fill="#00ffff"/>
<rect x="362" y="394" width="1" height="6" fill="#00ffff"/>
<rect x="363" y="394" width="1" height="6" fill="#00ffff"/>
<rect x="364" y="391" width="1" height="9" fill="#00ffff"/>
<rect x="365" y="390" width="1" height="10" fill="#ffff00"/>
<rect x="366" y="391" width="1" height="9" fill="#00ffff"/>
<rect x="367" y="392" width="1" height="8" fill="#00ffff"/>
<rect x="368" y="390" width="1" height="10" fill="#00ffff"/>
<rect x="369" y="390" width="1" height="10" fill="#ffff00"/>
<rect x="370" y="390" width="1" height="10" fill="#00ffff"/>
<rect x="371" y="391" width="1" height="9" fill="#00ffff"/>
<rect x="372" y="393" width="1" height="7" fill="#00ffff"/>
<rect x="373" y="390" width="1" height="10" fill="#ffff00"/>
<rect x="374" y="391" width="1" height="9" fill="#00ffff"/>
<rect x="375" y="391" width="1" height="9" fill="#00ffff"/>
<rect x="376" y="393" width="1" height="7" fill="#00ffff"/>
<rect x="377" y="393" width="1" height="7" fill="#00ffff"/>
<rect x="378" y="392" width="1" height="8" fill="#00ffff"/>
<rect x="379" y="391" width="1" height="9" fill="#00ffff"/>
<rect x="380" y="394" width="1" height="6" fill="#00ffff"/>
<rect x="381" y="396" width="1" height="4" fill="#00ffff"/>
<rect x="382" y="390" width="1" height="10" fill="#ffff00"/>
<rect x="383" y="391" width="1" height="9" fill="#00ffff"/>
<rect x="384" y="390" width="1" height="10" fill="#00ffff"/>
<rect x="385" y="390" width="1" height="10" fill="#00ffff"/>
<rect x="386" y="390" width="1" height="10" fill="#00ffff"/>
<rect x="387" y="390" width="1" height="10" fill="#00ffff"/>
<rect x="388" y="392" width="1" height="8" fill="#00ffff"/>
<rect x="389" y="394" width="1" height="6" fill="#00ffff"/>
<rect x="390" y="392" width="1" height="8" fill="#00ffff"/>
<rect x="391" y="394" width="1" height="6" fill="#00ffff"/>
<rect x="392" y="392" width="1" height="8" fill="#00ffff"/>
<rect x="393" y="392" width="1" height="8" fill="#00ffff"/>
<rect x="394" y="392" width="1" height="8" fill="#00ffff"/>
<rect x="395" y="394" width="1" height="6" fill="#00ffff"/>
<rect x="396" y="394" width="1" height="6" fill="#00ffff"/>
<rect x="397" y="392" width="1" height="8" fill="#00ffff"/>
<rect x="398" y="394" width="1" height="6" fill="#00ffff"/>
<rect x="399" y="394" width="1" height="6" fill="#00ffff"/>
<rect x="400" y="394" width="1" height="6" fill="#00ffff"/>
<rect x="401" y="394" width="1" height="6" fill="#00ffff"/>
<rect x="402" y="394" width="1" height="6" fill="#00ffff"/>
<rect x="403" y="392" width="1" height="8" fill="#00ffff"/>
<rect x="404" y="394" width="1" height="6" fill="#00ffff"/>
<rect x="405" y="392" width="1" height="8" fill="#00ffff"/>
<rect x="406" y="392" width="1" height="8" fill="#00ffff"/>
<rect x="407" y="394" width="1" height="6" fill="#00ffff"/>
<rect x="408" y="396" width="1" height="4" fill="#00ffff"/>
<rect x="409" y="394" width="1" height="6" fill="#00ffff"/>
<rect x="410" y="394" width="1" height="6" fill="#00ffff"/>
<rect x="411" y="396" width="1" height="4" fill="#00ffff"/>
<rect x="412" y="392" width="1" height="8" fill="#00ffff"/>
<rect x="413" y="394" width="1" height="6" fill="#00ffff"/>
<rect x="414" y="392" width="1" height="8" fill="#00ffff"/>
<rect x="415" y="394" width="1" height="6" fill="#00ffff"/>
<rect x="416" y="394" width="1" height="6" fill="#00ffff"/>
<rect x="417" y="394" width="1" height="6" fill="#00ffff"/>
<rect x="418" y="394" width="1" height="6" fill="#00ffff"/>
<rect x="419" y="392" width="1" height="8" fill="#00ffff"/>
<rect x="420" y="392" width="1" height="8" fill="#00ffff"/>
<rect x="421" y="392" width="1" height="8" fill="#00ffff"/>
<rect x="422" y="394" width="1" height="6" fill="#00ffff"/>
<rect x="423" y="394" width="1" height="6" fill="#00ffff"/>
<rect x="424" y="392" width="1" height="8" fill="#00ffff"/>
<rect x="425" y="392" width="1" height="8" fill="#00ffff"/>
<rect x="426" y="390" width="1" height="10" fill="#00ffff"/>
<rect x="427" y="394" width="1" height="6" fill="#00ffff"/>
<rect x="428" y="394" width="1" height="6" fill="#00ffff"/>
<rect x="429" y="392" width="1" height="8" fill="#00ffff"/>
<rect x="430" y="394" width="1" height="6" fill="#00ffff"/>
<rect x="431" y="394" width="1" height="6" fill="#00ffff"/>
<rect x="432" y="394" width="1" height="6" fill="#00ffff"/>
<rect x="433" y="392" width="1" height="8" fill="#00ffff"/>
<rect x="434" y="392" width="1" height="8" fill="#00ffff"/>
<rect x="435" y="396" width="1" height="4" fill="#00ffff"/>
<rect x="436" y="394" width="1" height="6" fill="#00ffff"/>
<rect x="437" y="392" width="1" height="8" fill="#00ffff"/>
<rect x="438" y="392" width="1" height="8" fill="#00ffff"/>
<rect x="439" y="394" width="1" height="6" fill="#00ffff"/>
<rect x="440" y="396" width="1" height="4" fill="#00ffff"/>
<rect x="441" y="394" width="1" height="6" fill="#00ffff"/>
<rect x="442" y="394" width="1" height="6" fill="#00ffff"/>
<rect x="443" y="394" width="1" height="6" fill="#00ffff"/>
<rect x="444" y="394" width="1" height="6" fill="#00ffff"/>
<rect x="445" y="398" width="1" height="2" fill="#00ffff"/>
<rect x="446" y="394" width="1" height="6" fill="#00ffff"/>
<rect x="447" y="396" width="1" height="4" fill="#00ffff"/>
<rect x="448" y="394" width="1" height="6" fill="#00ffff"/>
<rect x="449" y="392" width="1" height="8" fill="#00ffff"/>
<rect x="450" y="394" width="1" height="6" fill="#00ffff"/>
<rect x="451" y="396" width="1" height="4" fill="#00ffff"/>
<rect x="452" y="394" width="1" height="6" fill="#00ffff"/>
<rect x="453" y="394" width="1" height="6" fill="#00ffff"/>
<rect x="454" y="396" width="1" height="4" fill="#00ffff"/>
<rect x="455" y="394" width="1" height="6" fill="#00ffff"/>
<rect x="456" y="392" width="1" height="8" fill="#00ffff"/>
<rect x="457" y="394" width="1" height="6" fill="#00ffff"/>
<rect x="458" y="392" width="1" height="8" fill="#00ffff"/>
<rect x="459" y="392" width="1" height="8" fill="#00ffff"/>
<rect x="460" y="392" width="1" height="8" fill="#00ffff"/>
<rect x="461" y="390" width="1" height="10" fill="#00ffff"/>
<rect x="462" y="392" width="1" height="8" fill="#00ffff"/>
<rect x="463" y="392" width="1" height="8" fill="#00ffff"/>
<rect x="464" y="392" width="1" height="8" fill="#00ffff"/>
<rect x="465" y="390" width="1" height="10" fill="#00ffff"/>
<rect x="466" y="394" width="1" height="6" fill="#00ffff"/>
<rect x="467" y="392" width="1" height="8" fill="#00ffff"/>
<rect x="468" y="392" width="1" height="8" fill="#00ffff"/>
<rect x="469" y="392" width="1" height="8" fill="#00ffff"/>
<rect x="470" y="394" width="1" height="6" fill="#00ffff"/>
<rect x="471" y="392" width="1" height="8" fill="#00ffff"/>
<rect x="472" y="392" width="1" height="8" fill="#00ffff"/>
<rect x="473" y="396" width="1" height="4" fill="#00ffff"/>
<rect x="474" y="392" width="1" height="8" fill="#00ffff"/>
<rect x="475" y="394" width="1" height="6" fill="#00ffff"/>
<rect x="476" y="392" width="1" height="8" fill="#00ffff"/>
<rect x="477" y="392" width="1" height="8" fill="#00ffff"/>
<rect x="478" y="396" width="1" height="4" fill="#00ffff"/>
<rect x="479" y="394" width="1" height="6" fill="#00ffff"/>
<rect x="480" y="394" width="1" height="6" fill="#00ffff"/>
<rect x="481" y="394" width="1" height="6" fill="#00ffff"/>
<rect x="482" y="392" width="1" height="8" fill="#00ffff"/>
<rect x="483" y="394" width="1" height="6" fill="#00ffff"/>
<rect x="484" y="392" width="1" height="8" fill="#00ffff"/>
<rect x="485" y="396" width="1" height="4" fill="#00ffff"/>
<rect x="486" y="396" width="1" height="4" fill="#00ffff"/>
<rect x="487" y="396" width="1" height="4" fill="#00ffff"/>
<rect x="488" y="394" width="1" height="6" fill="#00ffff"/>
<rect x="489" y="392" width="1" height="8" fill="#00ffff"/>
<rect x="490" y="394" width="1" height="6" fill="#00ffff"/>
<rect x="491" y="394" width="1" height="6" fill="#00ffff"/>
<rect x="492" y="394" width="1" height="6" fill="#00ffff"/>
<rect x="493" y="392" width="1" height="8" fill="#00ffff"/>
<rect x="494" y="396" width="1" height="4" fill="#00ffff"/>
<rect x="495" y="394" width="1" height="6" fill="#00ffff"/>
<rect x="496" y="394" width="1" height="6" fill="#00ffff"/>
<rect x="497" y="394" width="1" height="6" fill="#00ffff"/>
<rect x="498" y="394" width="1" height="6" fill="#00ffff"/>
<rect x="499" y="394" width="1" height="6" fill="#00ffff"/>
<rect x="500" y="391" width="1" height="9" fill="#00ffff"/>
<rect x="501" y="393" width="1" height="7" fill="#00ffff"/>
<rect x="502" y="391" width="1" height="9" fill="#00ffff"/>
<rect x="503" y="392" width="1" height="8" fill="#00ffff"/>
<rect x="504" y="392" width="1" height="8" fill="#00ffff"/>
<rect x="505" y="392" width="1" height="8" fill="#00ffff"/>
<rect x="506" y="395" width="1" height="5" fill="#00ffff"/>
<rect x="507" y="394" width="1" height="6" fill="#00ffff"/>
<rect x="508" y="393" width="1" height="7" fill="#00ffff"/>
<rect x="509" y="394" width="1" height="6" fill="#00ffff"/>
<rect x="510" y="393" width="1" height="7" fill="#00ffff"/>
<rect x="511" y="395" width="1" height="5" fill="#00ffff"/>
<rect x="512" y="394" width="1" height="6" fill="#00ffff"/>
<rect x="513" y="393" width="1" height="7" fill="#00ffff"/>
<rect x="514" y="393" width="1" height="7" fill="#00ffff"/>
<rect x="515" y="394" width="1" height="6" fill="#00ffff"/>
<rect x="516" y="393" width="1" height="7" fill="#00ffff"/>
<rect x="517" y="392" width="1" height="8" fill="#00ffff"/>
<rect x="518" y="392" width="1" height="8" fill="#00ffff"/>
<rect x="519" y="394" width="1" height="6" fill="#00ffff"/>
<rect x="520" y="391" width="1" height="9" fill="#00ffff"/>
<rect x="521" y="393" width="1" height="7" fill="#00ffff"/>
<rect x="522" y="392" width="1" height="8" fill="#00ffff"/>
<rect x="523" y="393" width="1" height="7" fill="#00ffff"/>
<rect x="524" y="391" width="1" height="9" fill="#00ffff"/>
<rect x="525" y="391" width="1" height="9" fill="#00ffff"/>
<rect x="526" y="390" width="1" height="10" fill="#ffff00"/>
<rect x="527" y="386" width="1" height="14" fill="#ffff00"/>
<rect x="528" y="384" width="1" height="16" fill="#ffff00"/>
<rect x="529" y="383" width="1" height="17" fill="#ffff00"/>
<rect x="530" y="382" width="1" height="18" fill="#ffff00"/>
<rect x="531" y="384" width="1" height="16" fill="#ffff00"/>
<rect x="532" y="388" width="1" height="12" fill="#ffff00"/>
<rect x="533" y="388" width="1" height="12" fill="#ffff00"/>
<rect x="534" y="393" width="1" height="7" fill="#00ffff"/>
<rect x="535" y="393" width="1" height="7" fill="#00ffff"/>
<rect x="536" y="392" width="1" height="8" fill="#00ffff"/>
<rect x="537" y="390" width="1" height="10" fill="#00ffff"/>
<rect x="538" y="392" width="1" height="8" fill="#00ffff"/>
<rect x="539" y="393" width="1" height="7" fill="#00ffff"/>
<rect x="540" y="393" width="1" height="7" fill="#00ffff"/>
<rect x="541" y="394" width="1" height="6" fill="#00ffff"/>
<rect x="542" y="393" width="1" height="7" fill="#00ffff"/>
<rect x="543" y="395" width="1" height="5" fill="#00ffff"/>
<rect x="544" y="393" width="1" height="7" fill="#00ffff"/>
<rect x="545" y="395" width="1" height="5" fill="#00ffff"/>
<rect x="546" y="388" width="1" height="12" fill="#ffff00"/>
<rect x="547" y="388" width="1" height="12" fill="#ffff00"/>
<rect x="548" y="391" width="1" height="9" fill="#00ffff"/>
<rect x="549" y="394" width="1" height="6" fill="#00ffff"/>
<rect x="550" y="391" width="1" height="9" fill="#00ffff"/>
<rect x="551" y="392" width="1" height="8" fill="#00ffff"/>
<rect x="552" y="394" width="1" height="6" fill="#00ffff"/>
<rect x="553" y="395" width="1" height="5" fill="#00ffff"/>
<rect x="554" y="390" width="1" height="10" fill="#ffff00"/>
<rect x="555" y="391" width="1" height="9" fill="#00ffff"/>
<rect x="556" y="394" width="1" height="6" fill="#00ffff"/>
<rect x="557" y="394" width="1" height="6" fill="#00ffff"/>
<rect x="558" y="392" width="1" height="8" fill="#00ffff"/>
<rect x="559" y="389" width="1" height="11" fill="#ffff00"/>
<rect x="560" y="387" width="1" height="13" fill="#ffff00"/>
<rect x="561" y="387" width="1" height="13" fill="#ffff00"/>
<rect x="562" y="395" width="1" height="5" fill="#00ffff"/>
<rect x="563" y="395" width="1" height="5" fill="#00ffff"/>
<rect x="564" y="394" width="1" height="6" fill="#00ffff"/>
<rect x="565" y="392" width="1" height="8" fill="#00ffff"/>
<rect x="566" y="396" width="1" height="4" fill="#00ffff"/>
<rect x="567" y="395" width="1" height="5" fill="#00ffff"/>
<rect x="568" y="390" width="1" height="10" fill="#ffff00"/>
<rect x="569" y="390" width="1" height="10" fill="#00ffff"/>
<rect x="570" y="392" width="1" height="8" fill="#00ffff"/>
<rect x="571" y="394" width="1" height="6" fill="#00ffff"/>
<rect x="572" y="390" width="1" height="10" fill="#00ffff"/>
<rect x="573" y="394" width="1" height="6" fill="#00ffff"/>
<rect x="574" y="394" width="1" height="6" fill="#00ffff"/>
<rect x="575" y="392" width="1" height="8" fill="#00ffff"/>
<rect x="576" y="388" width="1" height="12" fill="#ffff00"/>
<rect x="577" y="392" width="1" height="8" fill="#00ffff"/>
<rect x="578" y="394" width="1" height="6" fill="#00ffff"/>
<rect x="579" y="389" width="1" height="11" fill="#ffff00"/>
<rect x="580" y="389" width="1" height="11" fill="#ffff00"/>
<rect x="581" y="390" width="1" height="10" fill="#00ffff"/>
<rect x="582" y="394" width="1" height="6" fill="#00ffff"/>
<rect x="583" y="390" width="1" height="10" fill="#ffff00"/>
<rect x="584" y="394" width="1" height="6" fill="#00ffff"/>
<rect x="585" y="394" width="1" height="6" fill="#00ffff"/>
<rect x="586" y="393" width="1" height="7" fill="#00ffff"/>
<rect x="587" y="392" width="1" height="8" fill="#00ffff"/>
<rect x="588" y="395" width="1" height="5" fill="#00ffff"/>
<rect x="589" y="394" width="1" height="6" fill="#00ffff"/>
<rect x="590" y="392" width="1" height="8" fill="#00ffff"/>
<rect x="591" y="394" width="1" height="6" fill="#00ffff"/>
<rect x="592" y="393" width="1" height="7" fill="#00ffff"/>
<rect x="593" y="391" width="1" height="9" fill="#00ffff"/>
<rect x="594" y="394" width="1" height="6" fill="#00ffff"/>
<rect x="595" y="390" width="1" height="10" fill="#ffff00"/>
<rect x="596" y="390" width="1" height="10" fill="#00ffff"/>
<rect x="597" y="390" width="1" height="10" fill="#00ffff"/>
<rect x="598" y="390" width="1" height="10" fill="#00ffff"/>
<rect x="599" y="389" width="1" height="11" fill="#ffff00"/>
<rect x="600" y="388" width="1" height="12" fill="#ffff00"/>
<rect x="601" y="387" width="1" height="13" fill="#ffff00"/>
<rect x="602" y="386" width="1" height="14" fill="#ffff00"/>
<rect x="603" y="384" width="1" height="16" fill="#ffff00"/>
<rect x="604" y="384" width="1" height="16" fill="#ffff00"/>
<rect x="605" y="385" width="1" height="15" fill="#ffff00"/>
<rect x="606" y="383" width="1" height="17" fill="#ffff00"/>
<rect x="607" y="382" width="1" height="18" fill="#ffff00"/>
<rect x="608" y="382" width="1" height="18" fill="#ffff00"/>
<rect x="609" y="389" width="1" height="11" fill="#ffff00"/>
<rect x="610" y="386" width="1" height="14" fill="#ffff00"/>
<rect x="611" y="388" width="1" height="12" fill="#ffff00"/>
<rect x="612" y="384" width="1" height="16" fill="#ffff00"/>
<rect x="613" y="388" width="1" height="12" fill="#ffff00"/>
<rect x="614" y="386" width="1" height="14" fill="#ffff00"/>
<rect x="615" y="389" width="1" height="11" fill="#ffff00"/>
<rect x="616" y="388" width="1" height="12" fill="#ffff00"/>
<rect x="617" y="389" width="1" height="11" fill="#ffff00"/>
<rect x="618" y="390" width="1" height="10" fill="#ffff00"/>
<rect x="619" y="390" width="1" height="10" fill="#ffff00"/>
<rect x="16" y="90" width="2" height="1" fill="#ffff00"/>
<rect x="16" y="100" width="2" height="1" fill="#ffff00"/>
<rect x="16" y="110" width="2" height="1" fill="#ffff00"/>
<rect x="16" y="120" width="2" height="1" fill="#ffff00"/>
<rect x="14" y="130" width="4" height="1" fill="#ffff00"/>
<rect x="16" y="140" width="2" height="1" fill="#ffff00"/>
<rect x="16" y="150" width="2" height="1" fill="#ffff00"/>
<rect x="16" y="160" width="2" height="1" fill="#ffff00"/>
<rect x="16" y="170" width="2" height="1" fill="#ffff00"/>
<rect x="14" y="180" width="4" height="1" fill="#ffff00"/>
<rect x="16" y="190" width="2" height="1" fill="#ffff00"/>
<rect x="16" y="200" width="2" height="1" fill="#ffff00"/>
<rect x="16" y="210" width="2" height="1" fill="#ffff00"/>
<rect x="16" y="220" width="2" height="1" fill="#ffff00"/>
<rect x="14" y="230" width="4" height="1" fill="#ffff00"/>
<rect x="16" y="240" width="2" height="1" fill="#ffff00"/>
<rect x="16" y="250" width="2" height="1" fill="#ffff00"/>
<rect x="16" y="260" width="2" height="1" fill="#ffff00"/>
<rect x="16" y="270" width="2" height="1" fill="#ffff00"/>
<rect x="14" y="280" width="4" height="1" fill="#ffff00"/>
<rect x="16" y="290" width="2" height="1" fill="#ffff00"/>
<rect x="16" y="300" width="2" height="1" fill="#ffff00"/>
<rect x="16" y="310" width="2" height="1" fill="#ffff00"/>
<rect x="16" y="320" width="2" height="1" fill="#ffff00"/>
<rect x="14" y="330" width="4" height="1" fill="#ffff00"/>
<rect x="16" y="340" width="2" height="1" fill="#ffff00"/>
<rect x="16" y="350" width="2" height="1" fill="#ffff00"/>
<rect x="16" y="360" width="2" height="1" fill="#ffff00"/>
<rect x="16" y="370" width="2" height="1" fill="#ffff00"/>
<rect x="14" y="380" width="4" height="1" fill="#ffff00"/>
<rect x="16" y="390" width="2" height="1" fill="#ffff00"/>
<rect x="624" y="90" width="2" height="1" fill="#ffff00"/>
<rect x="624" y="100" width="2" height="1" fill="#ffff00"/>
<rect x="624" y="110" width="2" height="1" fill="#ffff00"/>
<rect x="624" y="120" width="2" height="1" fill="#ffff00"/>
<rect x="624" y="130" width="4" height="1" fill="#ffff00"/>
<rect x="624" y="140" width="2" height="1" fill="#ffff00"/>
<rect x="624" y="150" width="2" height="1" fill="#ffff00"/>
<rect x="624" y="160" width="2" height="1" fill="#ffff00"/>
<rect x="624" y="170" width="2" height="1" fill="#ffff00"/>
<rect x="624" y="180" width="4" height="1" fill="#ffff00"/>
<rect x="624" y="190" width="2" height="1" fill="#ffff00"/>
<rect x="624" y="200" width="2" height="1" fill="#ffff00"/>
<rect x="624" y="210" width="2" height="1" fill="#ffff00"/>
<rect x="624" y="220" width="2" height="1" fill="#ffff00"/>
<rect x="624" y="230" width="4" height="1" fill="#ffff00"/>
<rect x="624" y="240" width="2" height="1" fill="#ffff00"/>
<rect x="624" y="250" width="2" height="1" fill="#ffff00"/>
<rect x="624" y="260" width="2" height="1" fill="#ffff00"/>
<rect x="624" y="270" width="2" height="1" fill="#ffff00"/>
<rect x="624" y="280" width="4" height="1" fill="#ffff00"/>
<rect x="624" y="290" width="2" height="1" fill="#ffff00"/>
<rect x="624" y="300" width="2" height="1" fill="#ffff00"/>
<rect x="624" y="310" width="2" height="1" fill="#ffff00"/>
<rect x="624" y="320" width="2" height="1" fill="#ffff00"/>
<rect x="624" y="330" width="4" height="1" fill="#ffff00"/>
<rect x="624" y="340" width="2" height="1" fill="#ffff00"/>
<rect x="624" y="350" width="2" height="1" fill="#ffff00"/>
<rect x="624" y="360" width="2" height="1" fill="#ffff00"/>
<rect x="624" y="370" width="2" height="1" fill="#ffff00"/>
<rect x="624" y="380" width="4" height="1" fill="#ffff00"/>
<rect x="624" y="390" width="2" height="1" fill="#ffff00"/>
<rect x="57" y="80" width="24" height="12" fill="#000"/>
<rect x="80" y="92" width="1" height="3" fill="#ffff00"/>
<rect x="117" y="80" width="24" height="12" fill="#000"/>
<rect x="140" y="92" width="1" height="3" fill="#ffff00"/>
<rect x="177" y="80" width="24" height="12" fill="#000"/>
<rect x="200" y="92" width="1" height="3" fill="#ffff00"/>
<rect x="237" y="80" width="24" height="12" fill="#000"/>
<rect x="260" y="92" width="1" height="3" fill="#ffff00"/>
<rect x="297" y="80" width="24" height="12" fill="#000"/>
<rect x="320" y="92" width="1" height="3" fill="#ffff00"/>
<rect x="357" y="80" width="24" height="12" fill="#000"/>
<rect x="380" y="92" width="1" height="3" fill="#ffff00"/>
<rect x="417" y="80" width="24" height="12" fill="#000"/>
<rect x="440" y="92" width="1" height="3" fill="#ffff00"/>
<rect x="477" y="80" width="24" height="12" fill="#000"/>
<rect x="500" y="92" width="1" height="3" fill="#ffff00"/>
<rect x="537" y="80" width="24" height="12" fill="#000"/>
<rect x="560" y="92" width="1" height="3" fill="#ffff00"/>
<rect x="597" y="80" width="24" height="12" fill="#000"/>
<rect x="620" y="92" width="1" height="3" fill="#ffff00"/>
</svg>
<div class="t" style="left:179px;top:5px;"><b>O</b>bserver           : <b>T</b>akanori Ka<b>w</b>achi</div>
<div class="t" style="left:179px;top:17px;">Receiving Location : <b>O</b>gaki, Gifu, J<b>A</b>P<b>A</b><b>N</b> (<i class="c">1</i><i>3</i><i>6</i>.<i>6</i><i>0</i>E, <i>3</i><i>5</i>.<i>3</i><i>5</i><b>N</b>)</div>
<div class="t" style="left:179px;top:29px;">Receiver           : R<i>8</i><i>2</i><i>0</i><b>T</b><i>2</i>(R<b>T</b>L-SDR) SDR-Sharp <i>5</i><i>3</i>.<i class="c">1</i><i>0</i><i>0</i><i>0</i><b>M</b>Hz</div>
<div class="t" style="left:179px;top:41px;">Receiving antenna  : <i>2</i>el-HB<i>9</i>CV Vertical (el. E-<b>W</b>)</div>
<div class="t" style="left:9px;top:20px;"><i>2</i><i>5</i><i class="c">1</i><i>0</i><i class="c">1</i><i>4</i><i class="c">1</i><i>3</i><i class="c">1</i><i>0</i>.png</div>
<div class="t" style="left:9px;top:40px;"><i>2</i><i>5</i>.<i class="c">1</i><i>0</i>.<i class="c">1</i><i>4</i> <i class="c">1</i><i>3</i>:<i class="c">1</i><i>0</i></div>
<div class="t" style="left:124px;top:25px;"><b>m</b>eteor</div>
<div class="t" style="left:139px;top:40px;"><i>4</i><i class="c">1</i></div>
<div class="g" style="left:10px;top:1px;">H</div>
<div class="g" style="left:31px;top:1px;">R</div>
<div class="g" style="left:49px;top:1px;">O</div>
<div class="g" style="left:70px;top:1px;">F</div>
<div class="g" style="left:88px;top:1px;">F</div>
<div class="g" style="left:106px;top:1px;">T</div>
<div class="t" style="left:125px;top:3px;color:#0f0"><i class="c">1</i></div>
<div class="t" style="left:133px;top:3px;color:#0f0"><i>0</i></div>
<div class="t" style="left:141px;top:3px;color:#0f0"><i>0</i></div>
<div class="t" style="left:57px;top:80px;"><i class="c">1</i><i>3</i><i class="c">1</i><i class="c">1</i></div>
<div class="t" style="left:117px;top:80px;"><i class="c">1</i><i>3</i><i class="c">1</i><i>2</i></div>
<div class="t" style="left:177px;top:80px;"><i class="c">1</i><i>3</i><i class="c">1</i><i>3</i></div>
<div class="t" style="left:237px;top:80px;"><i class="c">1</i><i>3</i><i class="c">1</i><i>4</i></div>
<div class="t" style="left:297px;top:80px;"><i class="c">1</i><i>3</i><i class="c">1</i><i>5</i></div>
<div class="t" style="left:357px;top:80px;"><i class="c">1</i><i>3</i><i class="c">1</i><i>6</i></div>
<div class="t" style="left:417px;top:80px;"><i class="c">1</i><i>3</i><i class="c">1</i><i>7</i></div>
<div class="t" style="left:477px;top:80px;"><i class="c">1</i><i>3</i><i class="c">1</i><i>8</i></div>
<div class="t" style="left:537px;top:80px;"><i class="c">1</i><i>3</i><i class="c">1</i><i>9</i></div>
<div class="t" style="left:597px;top:80px;"><i class="c">1</i><i>3</i><i>2</i><i>0</i></div>
<div class="s" style="left:-1px;top:74px;transform:scaleX(0.8)">k</div>
<div class="s" style="left:6px;top:74px;transform:scaleX(0.8)">H</div>
<div class="s" style="left:13px;top:74px;transform:scaleX(0.8);color:transparent">z</div>
<div class="t" style="left:0px;top:124px;"><i class="c">1</i></div>
<div class="t" style="left:8px;top:124px;"><i class="c">1</i></div>
<div class="t" style="left:0px;top:174px;"><i class="c">1</i></div>
<div class="t" style="left:8px;top:174px;"><i>0</i></div>
<div class="t" style="left:0px;top:224px;"><i>0</i></div>
<div class="t" style="left:8px;top:224px;"><i>9</i></div>
<div class="t" style="left:0px;top:274px;"><i>0</i></div>
<div class="t" style="left:8px;top:274px;"><i>8</i></div>
<div class="t" style="left:0px;top:324px;"><i>0</i></div>
<div class="t" style="left:8px;top:324px;"><i>7</i></div>
<div class="t" style="left:0px;top:374px;"><i>0</i></div>
<div class="t" style="left:8px;top:374px;"><i>6</i></div>
<svg width="629" height="400" style="position:absolute;left:0;top:0" shape-rendering="crispEdges"><path fill="#ff0" d="M181 6h2v1h-2zM180 7h1v1h-1zM183 7h1v1h-1zM180 8h1v1h-1zM183 8h1v1h-1zM180 9h1v1h-1zM183 9h1v1h-1zM180 10h1v1h-1zM183 10h1v1h-1zM180 11h1v1h-1zM183 11h1v1h-1zM180 12h1v1h-1zM183 12h1v1h-1zM180 13h1v1h-1zM183 13h1v1h-1zM181 14h2v1h-2z"/><path fill="#ff0" d="M306 6h5v1h-5zM308 7h1v1h-1zM308 8h1v1h-1zM308 9h1v1h-1zM308 10h1v1h-1zM308 11h1v1h-1zM308 12h1v1h-1zM308 13h1v1h-1zM308 14h1v1h-1z"/><path fill="#ff0" d="M372 9h1v1h-1zM376 9h1v1h-1zM372 10h1v1h-1zM374 10h1v1h-1zM376 10h1v1h-1zM372 11h1v1h-1zM374 11h1v1h-1zM376 11h1v1h-1zM372 12h1v1h-1zM374 12h1v1h-1zM376 12h1v1h-1zM372 13h1v1h-1zM374 13h1v1h-1zM376 13h1v1h-1zM373 14h1v1h-1zM375 14h1v1h-1z"/><path fill="#ff0" d="M307 18h2v1h-2zM306 19h1v1h-1zM309 19h1v1h-1zM306 20h1v1h-1zM309 20h1v1h-1zM306 21h1v1h-1zM309 21h1v1h-1zM306 22h1v1h-1zM309 22h1v1h-1zM306 23h1v1h-1zM309 23h1v1h-1zM306 24h1v1h-1zM309 24h1v1h-1zM306 25h1v1h-1zM309 25h1v1h-1zM307 26h2v1h-2z"/><path fill="#ff0" d="M392 18h1v1h-1zM392 19h1v1h-1zM391 20h1v1h-1zM393 20h1v1h-1zM391 21h1v1h-1zM393 21h1v1h-1zM391 22h1v1h-1zM393 22h1v1h-1zM390 23h1v1h-1zM394 23h1v1h-1zM390 24h5v1h-5zM390 25h1v1h-1zM394 25h1v1h-1zM390 26h1v1h-1zM394 26h1v1h-1z"/><path fill="#ff0" d="M404 18h1v1h-1zM404 19h1v1h-1zM403 20h1v1h-1zM405 20h1v1h-1zM403 21h1v1h-1zM405 21h1v1h-1zM403 22h1v1h-1zM405 22h1v1h-1zM402 23h1v1h-1zM406 23h1v1h-1zM402 24h5v1h-5zM402 25h1v1h-1zM406 25h1v1h-1zM402 26h1v1h-1zM406 26h1v1h-1z"/><path fill="#ff0" d="M408 18h1v1h-1zM412 18h1v1h-1zM408 19h2v1h-2zM412 19h1v1h-1zM408 20h2v1h-2zM412 20h1v1h-1zM408 21h1v1h-1zM410 21h1v1h-1zM412 21h1v1h-1zM408 22h1v1h-1zM410 22h1v1h-1zM412 22h1v1h-1zM408 23h1v1h-1zM410 23h1v1h-1zM412 23h1v1h-1zM408 24h1v1h-1zM411 24h2v1h-2zM408 25h1v1h-1zM411 25h2v1h-2zM408 26h1v1h-1zM412 26h1v1h-1z"/><path fill="#ff0" d="M510 18h1v1h-1zM514 18h1v1h-1zM510 19h2v1h-2zM514 19h1v1h-1zM510 20h2v1h-2zM514 20h1v1h-1zM510 21h1v1h-1zM512 21h1v1h-1zM514 21h1v1h-1zM510 22h1v1h-1zM512 22h1v1h-1zM514 22h1v1h-1zM510 23h1v1h-1zM512 23h1v1h-1zM514 23h1v1h-1zM510 24h1v1h-1zM513 24h2v1h-2zM510 25h1v1h-1zM513 25h2v1h-2zM510 26h1v1h-1zM514 26h1v1h-1z"/><path fill="#ff0" d="M330 30h5v1h-5zM332 31h1v1h-1zM332 32h1v1h-1zM332 33h1v1h-1zM332 34h1v1h-1zM332 35h1v1h-1zM332 36h1v1h-1zM332 37h1v1h-1zM332 38h1v1h-1z"/><path fill="#ff0" d="M354 30h5v1h-5zM356 31h1v1h-1zM356 32h1v1h-1zM356 33h1v1h-1zM356 34h1v1h-1zM356 35h1v1h-1zM356 36h1v1h-1zM356 37h1v1h-1zM356 38h1v1h-1z"/><path fill="#ff0" d="M504 30h1v1h-1zM508 30h1v1h-1zM504 31h2v1h-2zM507 31h2v1h-2zM504 32h2v1h-2zM507 32h2v1h-2zM504 33h1v1h-1zM506 33h1v1h-1zM508 33h1v1h-1zM504 34h1v1h-1zM506 34h1v1h-1zM508 34h1v1h-1zM504 35h1v1h-1zM506 35h1v1h-1zM508 35h1v1h-1zM504 36h1v1h-1zM508 36h1v1h-1zM504 37h1v1h-1zM508 37h1v1h-1zM504 38h1v1h-1zM508 38h1v1h-1z"/><path fill="#ff0" d="M462 42h1v1h-1zM466 42h1v1h-1zM462 43h1v1h-1zM466 43h1v1h-1zM462 44h1v1h-1zM464 44h1v1h-1zM466 44h1v1h-1zM462 45h1v1h-1zM464 45h1v1h-1zM466 45h1v1h-1zM462 46h1v1h-1zM464 46h1v1h-1zM466 46h1v1h-1zM462 47h1v1h-1zM464 47h1v1h-1zM466 47h1v1h-1zM462 48h1v1h-1zM464 48h1v1h-1zM466 48h1v1h-1zM462 49h1v1h-1zM464 49h1v1h-1zM466 49h1v1h-1zM463 50h1v1h-1zM465 50h1v1h-1z"/><path fill="#ff0" d="M125 29h4v1h-4zM125 30h1v1h-1zM127 30h1v1h-1zM129 30h1v1h-1zM125 31h1v1h-1zM127 31h1v1h-1zM129 31h1v1h-1zM125 32h1v1h-1zM127 32h1v1h-1zM129 32h1v1h-1zM125 33h1v1h-1zM127 33h1v1h-1zM129 33h1v1h-1zM125 34h1v1h-1zM127 34h1v1h-1zM129 34h1v1h-1z"/><rect x="132" y="12" width="1" height="1" fill="#0f0"/><rect x="140" y="12" width="1" height="1" fill="#0f0"/><path fill="#ff0" d="M14 79h4v1h-4zM17 80h1v1h-1zM16 81h1v1h-1zM15 82h1v1h-1zM14 83h1v1h-1zM14 84h4v1h-4z"/><rect x="7" y="133" width="1" height="1" fill="#ff0"/><rect x="7" y="183" width="1" height="1" fill="#ff0"/><rect x="7" y="233" width="1" height="1" fill="#ff0"/><rect x="7" y="283" width="1" height="1" fill="#ff0"/><rect x="7" y="333" width="1" height="1" fill="#ff0"/><rect x="7" y="383" width="1" height="1" fill="#ff0"/></svg>
</body></html>
